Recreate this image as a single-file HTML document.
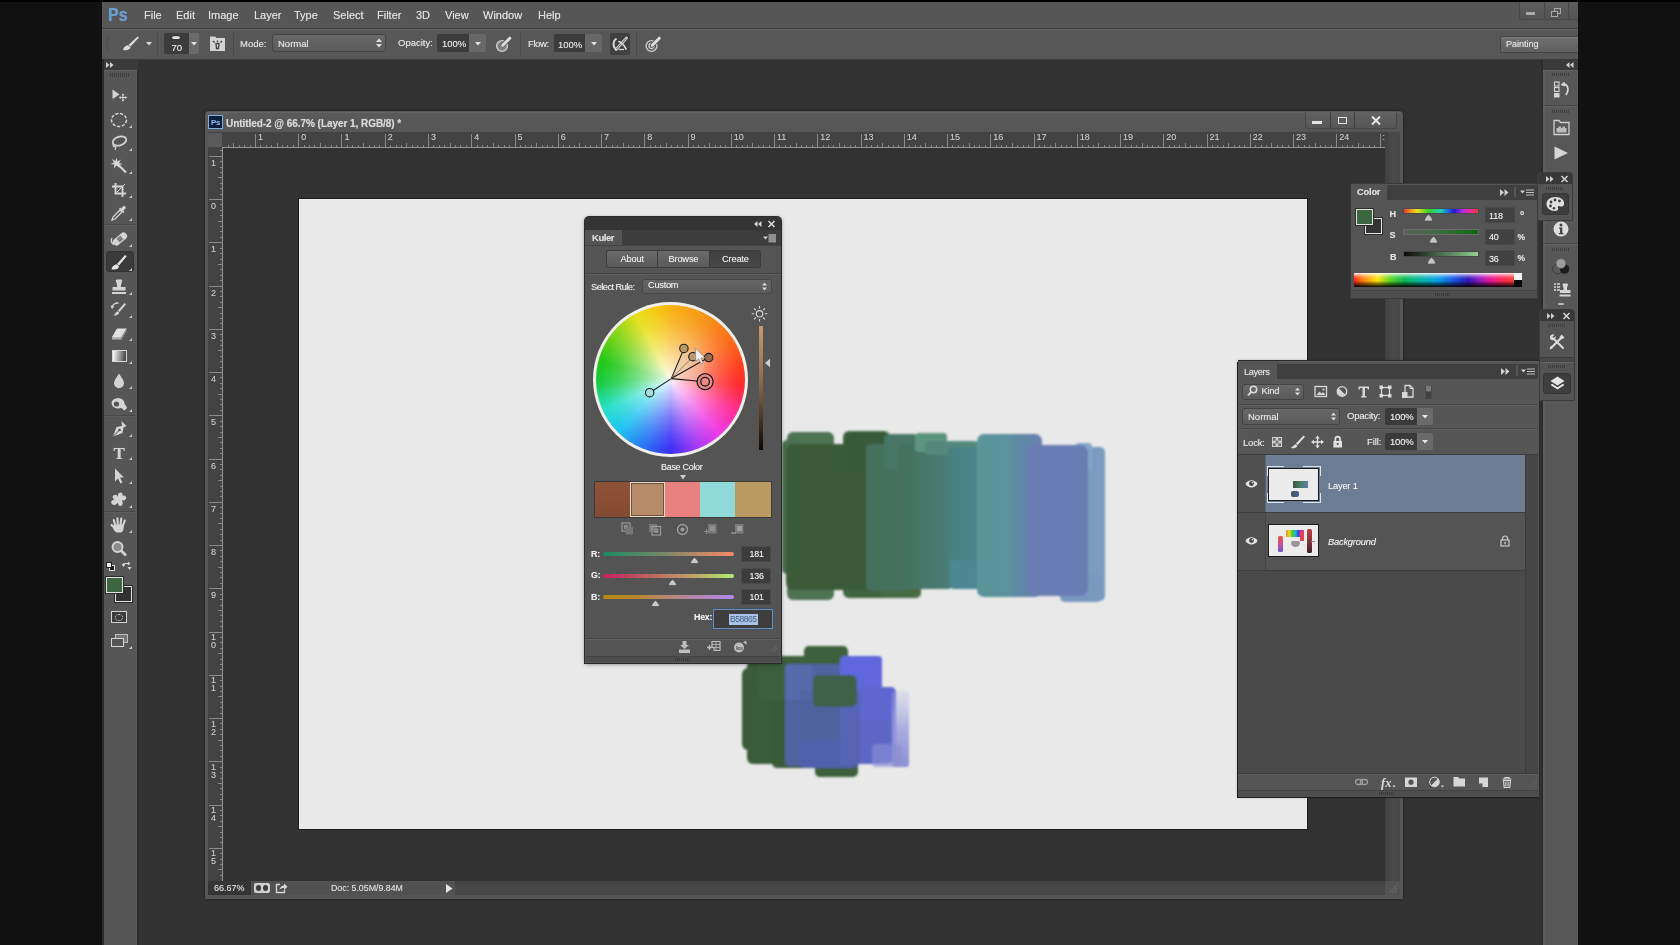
<!DOCTYPE html>
<html lang="en">
<head>
<meta charset="utf-8">
<title>Photoshop - Kuler</title>
<style>
*{box-sizing:border-box;margin:0;padding:0}
html,body{width:1680px;height:945px;overflow:hidden;background:#111}
body{position:relative;font-family:"Liberation Sans",sans-serif;font-size:9.5px;color:#e6e6e6;-webkit-font-smoothing:antialiased}
.abs{position:absolute}
#app{position:absolute;left:0;top:0;width:1680px;height:945px;overflow:hidden;will-change:transform}
#bg{position:absolute;left:0;top:0;width:1680px;height:945px;background:#323232}
.t{position:absolute;white-space:nowrap;line-height:1;color:#e4e4e4;text-shadow:0 0 .7px rgba(235,235,235,.55)}
svg{position:absolute;overflow:visible}
</style>
</head>
<body>
<div id="bg"></div>
<div id="app">
<!-- black side bars -->
<div class="abs" style="left:0;top:0;width:102px;height:945px;background:#111"></div>
<div class="abs" style="left:1578px;top:0;width:102px;height:945px;background:#111"></div>
<div class="abs" style="left:0;top:0;width:1680px;height:2px;background:#000"></div>
<!-- menu bar -->
<div class="abs" id="menubar" style="left:102px;top:2px;width:1476px;height:27px;background:#565657;border-bottom:1px solid #3e3e3e">
  <span class="t" style="left:6px;top:3px;font-size:19px;font-weight:bold;color:#6b9ccf;transform:scaleX(.84);transform-origin:0 0;text-shadow:0 0 .8px #6b9ccf">Ps</span>
  <span class="t mi" style="left:42px">File</span>
  <span class="t mi" style="left:74px">Edit</span>
  <span class="t mi" style="left:106px">Image</span>
  <span class="t mi" style="left:152px">Layer</span>
  <span class="t mi" style="left:192px">Type</span>
  <span class="t mi" style="left:231px">Select</span>
  <span class="t mi" style="left:275px">Filter</span>
  <span class="t mi" style="left:314px">3D</span>
  <span class="t mi" style="left:343px">View</span>
  <span class="t mi" style="left:381px">Window</span>
  <span class="t mi" style="left:436px">Help</span>
</div>
<style>
.mi{top:8px;font-size:11px;color:#e0e0e0}
.ob{position:absolute;border-radius:2px}
</style>
<!-- window buttons top-right -->
<div class="abs" style="left:1519px;top:2px;width:59px;height:17.500px;background:linear-gradient(#5d5d5d,#535353);border:1px solid #474747;border-top:none;border-right:none;border-radius:0 0 0 3px"></div><div class="abs" style="left:1568px;top:2px;width:1px;height:16px;background:#474747"></div>
<div class="abs" style="left:1526px;top:12px;width:9px;height:3px;background:#a8a8a8"></div>
<div class="abs" style="left:1554px;top:8px;width:7px;height:6px;border:1.5px solid #a8a8a8"></div>
<div class="abs" style="left:1551px;top:11px;width:7px;height:6px;border:1.5px solid #a8a8a8;background:#4c4c4c"></div>
<div class="abs" style="left:1543.500px;top:2px;width:1px;height:16px;background:#474747"></div>
<!-- options bar -->
<div class="abs" id="optbar" style="left:102px;top:29px;width:1476px;height:30.500px;background:#575757;border-top:1px solid #626262;border-bottom:1px solid #3a3a3a"></div>
<!-- grip -->
<div class="abs" style="left:106px;top:35px;width:3px;height:17px;background:repeating-linear-gradient(#4a4a4a 0 1px,transparent 1px 2px);opacity:.8"></div>
<!-- brush icon -->
<svg style="left:120px;top:33px" width="24" height="20" viewBox="0 0 24 20"><path d="M17.5 3.5 L19 4.5 L10.5 13.5 L8.5 12 Z" fill="#dcdcdc"/><path d="M8 12.300L10.500 14.300C10.500 16.600 7 17.800 3.200 16.900C2.800 15.200 5.500 12.600 8 12.300Z" fill="#dcdcdc"/></svg>
<svg style="left:146px;top:42px" width="6" height="4" viewBox="0 0 6 4"><path d="M0 0H6L3 3.5Z" fill="#d8d8d8"/></svg>
<div class="abs" style="left:157px;top:32px;width:1px;height:24px;background:#4a4a4a"></div>
<!-- size box -->
<div class="abs" style="left:164px;top:33px;width:25px;height:21px;background:#3c3c3c;border-radius:2px 0 0 2px"></div>
<div class="abs" style="left:189px;top:33px;width:10px;height:21px;background:#6a6a6a;border-radius:0 2px 2px 0"></div>
<div class="abs" style="left:172px;top:36px;width:8px;height:3px;background:#e0e0e0;border-radius:50%"></div>
<span class="t" style="left:171.5px;top:43px;font-size:9.5px">70</span>
<svg style="left:191px;top:42px" width="6" height="4" viewBox="0 0 6 4"><path d="M0 0H6L3 3.5Z" fill="#e0e0e0"/></svg>
<!-- brush panel toggle icon -->
<svg style="left:209px;top:35px" width="17" height="17" viewBox="0 0 17 17"><path d="M1 1.5H6L7.5 3H16V16H1Z" fill="#d2d2d2"/><path d="M4 6l1.5 1.5M8.5 5.5V7M13 6l-1.500 1.500M7 8.500c0 2 .5 3 .5 5h2c0-2 .5-3 .5-5Z" stroke="#444" stroke-width="1.300" fill="none"/></svg>
<div class="abs" style="left:233px;top:32px;width:1px;height:24px;background:#4a4a4a"></div>
<span class="t" style="left:240px;top:39px;font-size:9.5px">Mode:</span>
<div class="abs" style="left:272px;top:34px;width:114px;height:18px;border-radius:3px;background:linear-gradient(#686868,#5a5a5a);border:1px solid #444"></div>
<span class="t" style="left:278px;top:39px;font-size:9.5px">Normal</span>
<svg style="left:376px;top:38px" width="6" height="10" viewBox="0 0 6 10"><path d="M0 4L3 0.500L6 4ZM0 6H6L3 9.500Z" fill="#dcdcdc"/></svg>
<span class="t" style="left:398px;top:38px;font-size:9.5px">Opacity:</span>
<div class="abs" style="left:437px;top:34px;width:32px;height:18px;background:#3c3c3c;border-radius:2px 0 0 2px"></div>
<div class="abs" style="left:469px;top:34px;width:17px;height:18px;background:#686868;border-radius:0 2px 2px 0"></div>
<span class="t" style="left:442px;top:39px;font-size:9.5px">100%</span>
<svg style="left:475px;top:42px" width="6" height="4" viewBox="0 0 6 4"><path d="M0 0H6L3 3.500Z" fill="#e0e0e0"/></svg>
<!-- pressure opacity icon -->
<svg style="left:494px;top:34px" width="20" height="20" viewBox="0 0 20 20"><defs><pattern id="dots" width="2.400" height="2.400" patternUnits="userSpaceOnUse"><rect width="2.400" height="2.400" fill="#a4a4a4"/><rect width="1.200" height="1.200" fill="#5c5c5c"/><rect x="1.200" y="1.200" width="1.200" height="1.200" fill="#5c5c5c"/></pattern></defs><circle cx="8" cy="12" r="5.400" fill="url(#dots)" stroke="#cdcdcd" stroke-width="1.400"/><path d="M8.800 11.200L15.800 4.200" stroke="#575757" stroke-width="4.600" stroke-linecap="round"/><path d="M8.800 11.200L15.800 4.200" stroke="#dedede" stroke-width="3" stroke-linecap="round"/><path d="M7.300 12.700l1-2.300 1.300 1.300z" fill="#dedede"/></svg>
<div class="abs" style="left:520px;top:32px;width:1px;height:24px;background:#4a4a4a"></div>
<span class="t" style="left:528px;top:39px;font-size:9.500px;letter-spacing:-.4px">Flow:</span>
<div class="abs" style="left:554px;top:34px;width:31px;height:18px;background:#3c3c3c;border-radius:2px 0 0 2px"></div>
<div class="abs" style="left:585px;top:34px;width:17px;height:18px;background:#686868;border-radius:0 2px 2px 0"></div>
<span class="t" style="left:558px;top:39.500px;font-size:9.500px">100%</span>
<svg style="left:591px;top:42px" width="6" height="4" viewBox="0 0 6 4"><path d="M0 0H6L3 3.500Z" fill="#e0e0e0"/></svg>
<!-- airbrush icon -->
<div class="abs" style="left:610px;top:33px;width:20px;height:22px;background:#3f3f3f;border-radius:2px"></div>
<svg style="left:610px;top:34px" width="20" height="20" viewBox="0 0 20 20"><path d="M6.500 4.500C2.500 7 2.500 13 6.500 15.500" fill="none" stroke="#d4d4d4" stroke-width="2"/><path d="M6 15.500L16.500 4" stroke="#d8d8d8" stroke-width="2.600" stroke-linecap="round"/><path d="M6.500 15L16 4.500" stroke="#3f3f3f" stroke-width=".9"/><path d="M9 7.500C12 8.500 14 11 16 15" fill="none" stroke="#d4d4d4" stroke-width="1.700" stroke-linecap="round"/><path d="M8.500 15.500h5.500" stroke="#d4d4d4" stroke-width="1.300"/></svg>
<div class="abs" style="left:636px;top:32px;width:1px;height:24px;background:#4a4a4a"></div>
<svg style="left:643px;top:34px" width="20" height="20" viewBox="0 0 20 20"><circle cx="8.500" cy="12" r="5.400" fill="none" stroke="#cdcdcd" stroke-width="1.400"/><circle cx="8.500" cy="12" r="2.500" fill="none" stroke="#cdcdcd" stroke-width="1.300"/><path d="M9.300 11.200L16.300 4.200" stroke="#575757" stroke-width="4.600" stroke-linecap="round"/><path d="M9.300 11.200L16.300 4.200" stroke="#dedede" stroke-width="3" stroke-linecap="round"/><path d="M7.800 12.700l1-2.300 1.300 1.300z" fill="#dedede"/></svg>
<!-- workspace switcher -->
<div class="abs" style="left:1499.500px;top:35.500px;width:78.500px;height:17.500px;background:linear-gradient(#6f6f6f,#5f5f5f);border:1px solid #454545;border-right:none;border-radius:2px 0 0 2px;box-shadow:inset 0 1px 0 #7c7c7c"></div>
<span class="t" style="left:1506px;top:39.500px;font-size:9px">Painting</span>
<!-- left toolbar -->
<div class="abs" style="left:102px;top:59px;width:2px;height:886px;background:#2b2b2b"></div>
<div class="abs" style="left:104px;top:60px;width:34px;height:10px;background:#3a3a3a"></div>
<div class="abs" style="left:104px;top:70px;width:33px;height:875px;background:#565656;border-top:1px solid #626262"></div>
<div class="abs" style="left:137px;top:70px;width:3px;height:875px;background:linear-gradient(90deg,#2a2a2a,#323232)"></div>
<svg style="left:106px;top:62px" width="8" height="6" viewBox="0 0 8 6"><path d="M0 0L3.500 3L0 6ZM4 0L7.500 3L4 6Z" fill="#d0d0d0"/></svg>
<div class="abs" style="left:110px;top:73px;width:20px;height:4px;background:repeating-linear-gradient(90deg,#3e3e3e 0 1px,transparent 1px 2px)"></div>
<div class="abs" style="left:105px;top:224px;width:30px;height:1px;background:#474747"></div><div class="abs" style="left:105px;top:225px;width:30px;height:1px;background:#5e5e5e"></div>
<div class="abs" style="left:105px;top:415px;width:30px;height:1px;background:#474747"></div><div class="abs" style="left:105px;top:416px;width:30px;height:1px;background:#5e5e5e"></div>
<div class="abs" style="left:105px;top:511px;width:30px;height:1px;background:#474747"></div><div class="abs" style="left:105px;top:512px;width:30px;height:1px;background:#5e5e5e"></div>
<div class="abs" style="left:106px;top:251px;width:28px;height:21px;background:#3a3a3a;border-radius:3px;border:1px solid #333"></div>
<svg style="left:109px;top:85px" width="20" height="20" viewBox="0 0 20 20"><path d="M3.500 4.500L10.500 9.500L3.500 14Z" fill="#d4d4d4"/><path d="M14 9.500v6M11 12.500h6" stroke="#d4d4d4" stroke-width="1.100"/><path d="M14 8.300l1.400 1.900h-2.800zM14 16.700l1.400-1.900h-2.800zM9.800 12.500l1.900-1.400v2.800zM18.200 12.500l-1.900-1.400v2.800z" fill="#d4d4d4"/></svg>
<svg style="left:109px;top:110px" width="20" height="20" viewBox="0 0 20 20"><ellipse cx="10" cy="10" rx="7.500" ry="6.500" fill="none" stroke="#d4d4d4" stroke-width="1.500" stroke-dasharray="3.200 1.600"/></svg>
<svg style="left:129px;top:125px" width="3" height="3" viewBox="0 0 3 3"><path d="M3 0V3H0Z" fill="#c8c8c8"/></svg>
<svg style="left:109px;top:133px" width="20" height="20" viewBox="0 0 20 20"><ellipse cx="10.500" cy="8" rx="7" ry="4.300" fill="none" stroke="#d4d4d4" stroke-width="1.700" transform="rotate(-18 10.500 8)"/><path d="M5 10.500c-1.500 1.500-1 3.500.8 3.200c1.200-.2 1.200 1.600.2 3.300" fill="none" stroke="#d4d4d4" stroke-width="1.300"/></svg>
<svg style="left:129px;top:148px" width="3" height="3" viewBox="0 0 3 3"><path d="M3 0V3H0Z" fill="#c8c8c8"/></svg>
<svg style="left:109px;top:156px" width="20" height="20" viewBox="0 0 20 20"><path d="M9 8.500L17 16.500" stroke="#d4d4d4" stroke-width="2.200"/><path d="M7.500 1.500l1 4 3.500-2-2 3.500 4 1-4 1 .5 3-3-2.500-2.500 3 .3-4-3.800-.5 3.500-1.500-2-3.500 3.500 2z" fill="#d4d4d4"/></svg>
<svg style="left:129px;top:171px" width="3" height="3" viewBox="0 0 3 3"><path d="M3 0V3H0Z" fill="#c8c8c8"/></svg>
<svg style="left:109px;top:180px" width="20" height="20" viewBox="0 0 20 20"><path d="M6.500 3V13.500H17M3 6.500H13.500V17" fill="none" stroke="#d4d4d4" stroke-width="1.900"/><path d="M16 4L7.500 12.500" stroke="#d4d4d4" stroke-width="1"/></svg>
<svg style="left:129px;top:195px" width="3" height="3" viewBox="0 0 3 3"><path d="M3 0V3H0Z" fill="#c8c8c8"/></svg>
<svg style="left:109px;top:203px" width="20" height="20" viewBox="0 0 20 20"><path d="M3 17l1-3 7-7 2 2-7 7z" fill="none" stroke="#d4d4d4" stroke-width="1.300"/><path d="M10 5.500l4.500 4.500 1-1-1.200-1.200 2.200-2.200c1.300-1.300-1-3.600-2.300-2.300l-2.200 2.200-1-1z" fill="#d4d4d4"/></svg>
<svg style="left:129px;top:218px" width="3" height="3" viewBox="0 0 3 3"><path d="M3 0V3H0Z" fill="#c8c8c8"/></svg>
<svg style="left:109px;top:229px" width="20" height="20" viewBox="0 0 20 20"><path d="M3 9c-1.500 2.500-.5 5.500 2 6.500" fill="none" stroke="#d4d4d4" stroke-width="1.400"/><g transform="rotate(-40 11 10)"><rect x="3" y="6.500" width="16" height="7" rx="3.300" fill="#d4d4d4"/><rect x="8.500" y="7.500" width="5" height="5" fill="#888"/><path d="M9.500 9h1M11.500 9h1M9.500 11h1M11.500 11h1" stroke="#555" stroke-width=".8"/></g></svg>
<svg style="left:129px;top:244px" width="3" height="3" viewBox="0 0 3 3"><path d="M3 0V3H0Z" fill="#c8c8c8"/></svg>
<svg style="left:109px;top:253px" width="20" height="20" viewBox="0 0 20 20"><path d="M16 2L17.700 3.300L10 12.500L8 11Z" fill="#e4e4e4"/><path d="M7.500 11.300L10 13.300C10 15.800 6.500 17.200 2.700 16.300C2.300 14.500 5 11.600 7.500 11.300Z" fill="#e4e4e4"/></svg>
<svg style="left:129px;top:268px" width="3" height="3" viewBox="0 0 3 3"><path d="M3 0V3H0Z" fill="#c8c8c8"/></svg>
<svg style="left:109px;top:277px" width="20" height="20" viewBox="0 0 20 20"><path d="M8 2.500h4c1.200 0 1.500 1 1 2l-1 3.500v2h4.500v3.500h-13v-3.500h4.500v-2l-1-3.500c-.5-1-.2-2 1-2z" fill="#d4d4d4"/><rect x="3" y="15" width="14" height="2" fill="#d4d4d4"/></svg>
<svg style="left:129px;top:292px" width="3" height="3" viewBox="0 0 3 3"><path d="M3 0V3H0Z" fill="#c8c8c8"/></svg>
<svg style="left:109px;top:300px" width="20" height="20" viewBox="0 0 20 20"><path d="M15.500 3L17 4.200L10.500 12L8.800 10.700Z" fill="#d4d4d4"/><path d="M8.300 11.200l2 1.600c-.7 2.300-3.500 3.200-6 2.600 1.700-.8 2-3.300 4-4.200z" fill="#d4d4d4"/><path d="M3 7.500c.5-3 3.500-5 6.500-4.300" fill="none" stroke="#d4d4d4" stroke-width="1.400"/><path d="M1.500 5.500l1.500 3.500 2.500-2.500z" fill="#d4d4d4"/></svg>
<svg style="left:129px;top:315px" width="3" height="3" viewBox="0 0 3 3"><path d="M3 0V3H0Z" fill="#c8c8c8"/></svg>
<svg style="left:109px;top:323px" width="20" height="20" viewBox="0 0 20 20"><path d="M8 5.500h9.500l-5 8.500H3z" fill="#e0e0e0"/><path d="M3 14h9.500v2.500H3z" fill="#b0b0b0"/><path d="M12.500 14l5-8.500v2.500l-5 8.500z" fill="#9a9a9a"/></svg>
<svg style="left:129px;top:338px" width="3" height="3" viewBox="0 0 3 3"><path d="M3 0V3H0Z" fill="#c8c8c8"/></svg>
<div class="abs" style="left:112px;top:350px;width:15px;height:12px;border:1.500px solid #d8d8d8;background:linear-gradient(95deg,#f4f4f4 5%,#444 95%)"></div>
<svg style="left:129px;top:361px" width="3" height="3" viewBox="0 0 3 3"><path d="M3 0V3H0Z" fill="#c8c8c8"/></svg>
<svg style="left:109px;top:371px" width="20" height="20" viewBox="0 0 20 20"><path d="M10 2.500c2 3.500 5 6.500 5 9.700a5 5 0 0 1-10 0c0-3.200 3-6.200 5-9.700z" fill="#d4d4d4"/></svg>
<svg style="left:129px;top:386px" width="3" height="3" viewBox="0 0 3 3"><path d="M3 0V3H0Z" fill="#c8c8c8"/></svg>
<svg style="left:109px;top:394px" width="20" height="20" viewBox="0 0 20 20"><path d="M2.500 9.500a6.500 5.500 0 0 1 13 0c0 1 2 2 2.500 4.500l-2.500 2.500c-2-1.500-3-3-4-2.500a6.500 5.500 0 0 1-9-4.500z" fill="#d4d4d4"/><circle cx="7.500" cy="10" r="2.600" fill="#545454"/></svg>
<svg style="left:129px;top:409px" width="3" height="3" viewBox="0 0 3 3"><path d="M3 0V3H0Z" fill="#c8c8c8"/></svg>
<svg style="left:109px;top:419px" width="20" height="20" viewBox="0 0 20 20"><path d="M12.500 2l5 5-3 1.500-1 5.500-9.500 3.500 3.500-9.500 5.500-1z" fill="#d4d4d4"/><path d="M4.500 17l5.500-5.500" stroke="#545454" stroke-width="1"/><circle cx="10.500" cy="11" r="1.300" fill="#545454"/></svg>
<svg style="left:129px;top:434px" width="3" height="3" viewBox="0 0 3 3"><path d="M3 0V3H0Z" fill="#c8c8c8"/></svg>
<span class="t" style="left:113.500px;top:445px;font-family:'Liberation Serif',serif;font-size:17px;font-weight:bold;color:#d4d4d4">T</span>
<svg style="left:129px;top:457px" width="3" height="3" viewBox="0 0 3 3"><path d="M3 0V3H0Z" fill="#c8c8c8"/></svg>
<svg style="left:109px;top:466px" width="20" height="20" viewBox="0 0 20 20"><path d="M6 2.500V15.500L9 12.500L11.500 17.500L13.500 16.500L11 11.500H15Z" fill="#d4d4d4"/></svg>
<svg style="left:129px;top:481px" width="3" height="3" viewBox="0 0 3 3"><path d="M3 0V3H0Z" fill="#c8c8c8"/></svg>
<svg style="left:109px;top:490px" width="20" height="20" viewBox="0 0 20 20"><path d="M10 3c2-1.500 4 0 3.500 2.500 2.500-.5 5 1.500 3 4-1 1.200-2.500 1-3.500.5.500 2 1.500 4-.5 5.500s-3.500-.5-3.500-3c-1.500 2-4 3.500-6 1.500s0-4 2.500-4.500c-2-1-2.500-3.500-.5-4.500s3.500.5 4 2c-.5-2 .2-3.300 1-4z" fill="#d4d4d4"/></svg>
<svg style="left:129px;top:505px" width="3" height="3" viewBox="0 0 3 3"><path d="M3 0V3H0Z" fill="#c8c8c8"/></svg>
<svg style="left:109px;top:515px" width="20" height="20" viewBox="0 0 20 20"><g fill="none" stroke="#d4d4d4" stroke-width="2.100" stroke-linecap="round"><path d="M6.200 10.500L4.800 5"/><path d="M8.800 9.500L8.500 3.200"/><path d="M11.500 9.500L12.300 3.500"/><path d="M14 10.500L15.800 5.500"/><path d="M5.500 13L2.500 10"/></g><path d="M5 9.500h10l-.5 4.500c-.3 2-1.500 3.500-3 3.500h-3.500c-1.500 0-3-2-4-4.500z" fill="#d4d4d4"/></svg>
<svg style="left:129px;top:530px" width="3" height="3" viewBox="0 0 3 3"><path d="M3 0V3H0Z" fill="#c8c8c8"/></svg>
<svg style="left:109px;top:539px" width="20" height="20" viewBox="0 0 20 20"><circle cx="8.500" cy="8" r="5" fill="#8c8c8c" stroke="#d4d4d4" stroke-width="1.900"/><path d="M12 11.500L17 16.500" stroke="#d4d4d4" stroke-width="2.600"/></svg>
<div class="abs" style="left:109px;top:565px;width:6px;height:6px;background:#222;border:1px solid #ddd"></div>
<div class="abs" style="left:106px;top:562px;width:6px;height:6px;background:#eee;border:1px solid #222"></div>
<svg style="left:121px;top:561px" width="11" height="11" viewBox="0 0 11 11"><path d="M2.500 5V3.500a1 1 0 0 1 1-1H7.500M8.500 6v1.500" fill="none" stroke="#d4d4d4" stroke-width="1.200"/><path d="M2.500 7.500L.5 4.500h4zM8.500 10.500L6.500 7.500h4z" fill="#d4d4d4" transform="translate(0,-1.500)"/><path d="M9.500 2.500L6.800 .5v4z" fill="#d4d4d4"/></svg>
<div class="abs" style="left:115px;top:586px;width:17px;height:16px;background:#323232;border:1px solid #e2e2e2;box-shadow:0 0 0 1px #2a2a2a"></div>
<div class="abs" style="left:106px;top:577px;width:17px;height:16px;background:#3c6640;border:1px solid #e2e2e2;box-shadow:0 0 0 1px #2a2a2a"></div>
<div class="abs" style="left:111px;top:611px;width:16px;height:12px;border:1.500px solid #d4d4d4;background:#3c3c3c"></div>
<div class="abs" style="left:115px;top:613.500px;width:8px;height:7px;border:1.500px dotted #d4d4d4;border-radius:50%"></div>
<div class="abs" style="left:115px;top:634px;width:13px;height:9px;border:1.500px solid #bdbdbd;background:#777"></div>
<div class="abs" style="left:111px;top:638px;width:13px;height:9px;border:1.500px solid #d4d4d4;background:#545454"></div>
<svg style="left:129px;top:646px" width="3" height="3" viewBox="0 0 3 3"><path d="M3 0V3H0Z" fill="#c8c8c8"/></svg>
<!-- document window -->
<div class="abs" style="left:205px;top:111px;width:1198px;height:788px;background:#555;border-radius:4px 4px 0 0;box-shadow:0 0 3px rgba(0,0,0,.45)"></div>
<div class="abs" style="left:206px;top:112px;width:1196px;height:20px;background:linear-gradient(#5a5a5a,#565656);border-radius:3px 3px 0 0;border-top:1px solid #646464"></div>
<div class="abs" style="left:208px;top:115px;width:15px;height:14px;background:#0d1b3c;border:1px solid #7fb0e0"></div>
<span class="t" style="left:211px;top:118.500px;font-size:8px;font-weight:bold;color:#8fc0f0;letter-spacing:-.3px;text-shadow:none">Ps</span>
<span class="t" style="left:226px;top:118.500px;font-size:10px;font-weight:bold;color:#d8d8d8;letter-spacing:-.05px">Untitled-2 @ 66.7% (Layer 1, RGB/8) *</span>
<div class="abs" style="left:1305px;top:112px;width:92px;height:17px;background:linear-gradient(#626262,#565656);border:1px solid #464646;border-top:none;border-radius:0 0 4px 4px"></div>
<div class="abs" style="left:1330px;top:112px;width:1px;height:16px;background:#424242"></div><div class="abs" style="left:1354px;top:112px;width:1px;height:16px;background:#424242"></div>
<div class="abs" style="left:1312px;top:121px;width:10px;height:3px;background:#e2e2e2"></div>
<div class="abs" style="left:1338px;top:117px;width:9px;height:7px;border:1.500px solid #e2e2e2"></div>
<svg style="left:1371px;top:116px" width="10" height="9" viewBox="0 0 10 9"><path d="M1 .5L9 8.500M9 .5L1 8.500" stroke="#e6e6e6" stroke-width="1.900"/></svg>
<div class="abs" style="left:223px;top:148px;width:1162px;height:733px;background:#323232"></div>
<div class="abs" style="left:208px;top:132px;width:1177px;height:16px;background:#434343"></div>
<div class="abs" style="left:208px;top:148px;width:15px;height:733px;background:#434343"></div>
<div class="abs" style="left:208px;top:133px;width:14px;height:14px;background:#5a5a5a"></div>
<svg style="left:0;top:0" width="1680" height="945" viewBox="0 0 1680 945" shape-rendering="crispEdges"><rect x="227.9" y="145" width="1" height="3" fill="#868686"/><rect x="233.3" y="143" width="1" height="5" fill="#868686"/><rect x="238.7" y="145" width="1" height="3" fill="#868686"/><rect x="244.1" y="145" width="1" height="3" fill="#868686"/><rect x="249.5" y="145" width="1" height="3" fill="#868686"/><rect x="254.9" y="134" width="1" height="14" fill="#8a8a8a"/><rect x="260.4" y="145" width="1" height="3" fill="#868686"/><rect x="265.8" y="145" width="1" height="3" fill="#868686"/><rect x="271.2" y="145" width="1" height="3" fill="#868686"/><rect x="276.6" y="143" width="1" height="5" fill="#868686"/><rect x="282.0" y="145" width="1" height="3" fill="#868686"/><rect x="287.4" y="145" width="1" height="3" fill="#868686"/><rect x="292.8" y="145" width="1" height="3" fill="#868686"/><rect x="298.2" y="134" width="1" height="14" fill="#8a8a8a"/><rect x="303.6" y="145" width="1" height="3" fill="#868686"/><rect x="309.0" y="145" width="1" height="3" fill="#868686"/><rect x="314.4" y="145" width="1" height="3" fill="#868686"/><rect x="319.8" y="143" width="1" height="5" fill="#868686"/><rect x="325.2" y="145" width="1" height="3" fill="#868686"/><rect x="330.6" y="145" width="1" height="3" fill="#868686"/><rect x="336.0" y="145" width="1" height="3" fill="#868686"/><rect x="341.4" y="134" width="1" height="14" fill="#8a8a8a"/><rect x="346.9" y="145" width="1" height="3" fill="#868686"/><rect x="352.3" y="145" width="1" height="3" fill="#868686"/><rect x="357.7" y="145" width="1" height="3" fill="#868686"/><rect x="363.1" y="143" width="1" height="5" fill="#868686"/><rect x="368.5" y="145" width="1" height="3" fill="#868686"/><rect x="373.9" y="145" width="1" height="3" fill="#868686"/><rect x="379.3" y="145" width="1" height="3" fill="#868686"/><rect x="384.7" y="134" width="1" height="14" fill="#8a8a8a"/><rect x="390.1" y="145" width="1" height="3" fill="#868686"/><rect x="395.5" y="145" width="1" height="3" fill="#868686"/><rect x="400.9" y="145" width="1" height="3" fill="#868686"/><rect x="406.3" y="143" width="1" height="5" fill="#868686"/><rect x="411.7" y="145" width="1" height="3" fill="#868686"/><rect x="417.1" y="145" width="1" height="3" fill="#868686"/><rect x="422.5" y="145" width="1" height="3" fill="#868686"/><rect x="427.9" y="134" width="1" height="14" fill="#8a8a8a"/><rect x="433.4" y="145" width="1" height="3" fill="#868686"/><rect x="438.8" y="145" width="1" height="3" fill="#868686"/><rect x="444.2" y="145" width="1" height="3" fill="#868686"/><rect x="449.6" y="143" width="1" height="5" fill="#868686"/><rect x="455.0" y="145" width="1" height="3" fill="#868686"/><rect x="460.4" y="145" width="1" height="3" fill="#868686"/><rect x="465.8" y="145" width="1" height="3" fill="#868686"/><rect x="471.2" y="134" width="1" height="14" fill="#8a8a8a"/><rect x="476.6" y="145" width="1" height="3" fill="#868686"/><rect x="482.0" y="145" width="1" height="3" fill="#868686"/><rect x="487.4" y="145" width="1" height="3" fill="#868686"/><rect x="492.8" y="143" width="1" height="5" fill="#868686"/><rect x="498.2" y="145" width="1" height="3" fill="#868686"/><rect x="503.6" y="145" width="1" height="3" fill="#868686"/><rect x="509.0" y="145" width="1" height="3" fill="#868686"/><rect x="514.5" y="134" width="1" height="14" fill="#8a8a8a"/><rect x="519.9" y="145" width="1" height="3" fill="#868686"/><rect x="525.3" y="145" width="1" height="3" fill="#868686"/><rect x="530.7" y="145" width="1" height="3" fill="#868686"/><rect x="536.1" y="143" width="1" height="5" fill="#868686"/><rect x="541.5" y="145" width="1" height="3" fill="#868686"/><rect x="546.9" y="145" width="1" height="3" fill="#868686"/><rect x="552.3" y="145" width="1" height="3" fill="#868686"/><rect x="557.7" y="134" width="1" height="14" fill="#8a8a8a"/><rect x="563.1" y="145" width="1" height="3" fill="#868686"/><rect x="568.5" y="145" width="1" height="3" fill="#868686"/><rect x="573.9" y="145" width="1" height="3" fill="#868686"/><rect x="579.3" y="143" width="1" height="5" fill="#868686"/><rect x="584.7" y="145" width="1" height="3" fill="#868686"/><rect x="590.1" y="145" width="1" height="3" fill="#868686"/><rect x="595.5" y="145" width="1" height="3" fill="#868686"/><rect x="601.0" y="134" width="1" height="14" fill="#8a8a8a"/><rect x="606.4" y="145" width="1" height="3" fill="#868686"/><rect x="611.8" y="145" width="1" height="3" fill="#868686"/><rect x="617.2" y="145" width="1" height="3" fill="#868686"/><rect x="622.6" y="143" width="1" height="5" fill="#868686"/><rect x="628.0" y="145" width="1" height="3" fill="#868686"/><rect x="633.4" y="145" width="1" height="3" fill="#868686"/><rect x="638.8" y="145" width="1" height="3" fill="#868686"/><rect x="644.2" y="134" width="1" height="14" fill="#8a8a8a"/><rect x="649.6" y="145" width="1" height="3" fill="#868686"/><rect x="655.0" y="145" width="1" height="3" fill="#868686"/><rect x="660.4" y="145" width="1" height="3" fill="#868686"/><rect x="665.8" y="143" width="1" height="5" fill="#868686"/><rect x="671.2" y="145" width="1" height="3" fill="#868686"/><rect x="676.6" y="145" width="1" height="3" fill="#868686"/><rect x="682.0" y="145" width="1" height="3" fill="#868686"/><rect x="687.5" y="134" width="1" height="14" fill="#8a8a8a"/><rect x="692.9" y="145" width="1" height="3" fill="#868686"/><rect x="698.3" y="145" width="1" height="3" fill="#868686"/><rect x="703.7" y="145" width="1" height="3" fill="#868686"/><rect x="709.1" y="143" width="1" height="5" fill="#868686"/><rect x="714.5" y="145" width="1" height="3" fill="#868686"/><rect x="719.9" y="145" width="1" height="3" fill="#868686"/><rect x="725.3" y="145" width="1" height="3" fill="#868686"/><rect x="730.7" y="134" width="1" height="14" fill="#8a8a8a"/><rect x="736.1" y="145" width="1" height="3" fill="#868686"/><rect x="741.5" y="145" width="1" height="3" fill="#868686"/><rect x="746.9" y="145" width="1" height="3" fill="#868686"/><rect x="752.3" y="143" width="1" height="5" fill="#868686"/><rect x="757.7" y="145" width="1" height="3" fill="#868686"/><rect x="763.1" y="145" width="1" height="3" fill="#868686"/><rect x="768.5" y="145" width="1" height="3" fill="#868686"/><rect x="774.0" y="134" width="1" height="14" fill="#8a8a8a"/><rect x="779.4" y="145" width="1" height="3" fill="#868686"/><rect x="784.8" y="145" width="1" height="3" fill="#868686"/><rect x="790.2" y="145" width="1" height="3" fill="#868686"/><rect x="795.6" y="143" width="1" height="5" fill="#868686"/><rect x="801.0" y="145" width="1" height="3" fill="#868686"/><rect x="806.4" y="145" width="1" height="3" fill="#868686"/><rect x="811.8" y="145" width="1" height="3" fill="#868686"/><rect x="817.2" y="134" width="1" height="14" fill="#8a8a8a"/><rect x="822.6" y="145" width="1" height="3" fill="#868686"/><rect x="828.0" y="145" width="1" height="3" fill="#868686"/><rect x="833.4" y="145" width="1" height="3" fill="#868686"/><rect x="838.8" y="143" width="1" height="5" fill="#868686"/><rect x="844.2" y="145" width="1" height="3" fill="#868686"/><rect x="849.6" y="145" width="1" height="3" fill="#868686"/><rect x="855.0" y="145" width="1" height="3" fill="#868686"/><rect x="860.5" y="134" width="1" height="14" fill="#8a8a8a"/><rect x="865.9" y="145" width="1" height="3" fill="#868686"/><rect x="871.3" y="145" width="1" height="3" fill="#868686"/><rect x="876.7" y="145" width="1" height="3" fill="#868686"/><rect x="882.1" y="143" width="1" height="5" fill="#868686"/><rect x="887.5" y="145" width="1" height="3" fill="#868686"/><rect x="892.9" y="145" width="1" height="3" fill="#868686"/><rect x="898.3" y="145" width="1" height="3" fill="#868686"/><rect x="903.7" y="134" width="1" height="14" fill="#8a8a8a"/><rect x="909.1" y="145" width="1" height="3" fill="#868686"/><rect x="914.5" y="145" width="1" height="3" fill="#868686"/><rect x="919.9" y="145" width="1" height="3" fill="#868686"/><rect x="925.3" y="143" width="1" height="5" fill="#868686"/><rect x="930.7" y="145" width="1" height="3" fill="#868686"/><rect x="936.1" y="145" width="1" height="3" fill="#868686"/><rect x="941.5" y="145" width="1" height="3" fill="#868686"/><rect x="947.0" y="134" width="1" height="14" fill="#8a8a8a"/><rect x="952.4" y="145" width="1" height="3" fill="#868686"/><rect x="957.8" y="145" width="1" height="3" fill="#868686"/><rect x="963.2" y="145" width="1" height="3" fill="#868686"/><rect x="968.6" y="143" width="1" height="5" fill="#868686"/><rect x="974.0" y="145" width="1" height="3" fill="#868686"/><rect x="979.4" y="145" width="1" height="3" fill="#868686"/><rect x="984.8" y="145" width="1" height="3" fill="#868686"/><rect x="990.2" y="134" width="1" height="14" fill="#8a8a8a"/><rect x="995.6" y="145" width="1" height="3" fill="#868686"/><rect x="1001.0" y="145" width="1" height="3" fill="#868686"/><rect x="1006.4" y="145" width="1" height="3" fill="#868686"/><rect x="1011.8" y="143" width="1" height="5" fill="#868686"/><rect x="1017.2" y="145" width="1" height="3" fill="#868686"/><rect x="1022.6" y="145" width="1" height="3" fill="#868686"/><rect x="1028.0" y="145" width="1" height="3" fill="#868686"/><rect x="1033.5" y="134" width="1" height="14" fill="#8a8a8a"/><rect x="1038.9" y="145" width="1" height="3" fill="#868686"/><rect x="1044.3" y="145" width="1" height="3" fill="#868686"/><rect x="1049.7" y="145" width="1" height="3" fill="#868686"/><rect x="1055.1" y="143" width="1" height="5" fill="#868686"/><rect x="1060.5" y="145" width="1" height="3" fill="#868686"/><rect x="1065.9" y="145" width="1" height="3" fill="#868686"/><rect x="1071.3" y="145" width="1" height="3" fill="#868686"/><rect x="1076.7" y="134" width="1" height="14" fill="#8a8a8a"/><rect x="1082.1" y="145" width="1" height="3" fill="#868686"/><rect x="1087.5" y="145" width="1" height="3" fill="#868686"/><rect x="1092.9" y="145" width="1" height="3" fill="#868686"/><rect x="1098.3" y="143" width="1" height="5" fill="#868686"/><rect x="1103.7" y="145" width="1" height="3" fill="#868686"/><rect x="1109.1" y="145" width="1" height="3" fill="#868686"/><rect x="1114.5" y="145" width="1" height="3" fill="#868686"/><rect x="1120.0" y="134" width="1" height="14" fill="#8a8a8a"/><rect x="1125.4" y="145" width="1" height="3" fill="#868686"/><rect x="1130.8" y="145" width="1" height="3" fill="#868686"/><rect x="1136.2" y="145" width="1" height="3" fill="#868686"/><rect x="1141.6" y="143" width="1" height="5" fill="#868686"/><rect x="1147.0" y="145" width="1" height="3" fill="#868686"/><rect x="1152.4" y="145" width="1" height="3" fill="#868686"/><rect x="1157.8" y="145" width="1" height="3" fill="#868686"/><rect x="1163.2" y="134" width="1" height="14" fill="#8a8a8a"/><rect x="1168.6" y="145" width="1" height="3" fill="#868686"/><rect x="1174.0" y="145" width="1" height="3" fill="#868686"/><rect x="1179.4" y="145" width="1" height="3" fill="#868686"/><rect x="1184.8" y="143" width="1" height="5" fill="#868686"/><rect x="1190.2" y="145" width="1" height="3" fill="#868686"/><rect x="1195.6" y="145" width="1" height="3" fill="#868686"/><rect x="1201.0" y="145" width="1" height="3" fill="#868686"/><rect x="1206.5" y="134" width="1" height="14" fill="#8a8a8a"/><rect x="1211.9" y="145" width="1" height="3" fill="#868686"/><rect x="1217.3" y="145" width="1" height="3" fill="#868686"/><rect x="1222.7" y="145" width="1" height="3" fill="#868686"/><rect x="1228.1" y="143" width="1" height="5" fill="#868686"/><rect x="1233.5" y="145" width="1" height="3" fill="#868686"/><rect x="1238.9" y="145" width="1" height="3" fill="#868686"/><rect x="1244.3" y="145" width="1" height="3" fill="#868686"/><rect x="1249.7" y="134" width="1" height="14" fill="#8a8a8a"/><rect x="1255.1" y="145" width="1" height="3" fill="#868686"/><rect x="1260.5" y="145" width="1" height="3" fill="#868686"/><rect x="1265.9" y="145" width="1" height="3" fill="#868686"/><rect x="1271.3" y="143" width="1" height="5" fill="#868686"/><rect x="1276.7" y="145" width="1" height="3" fill="#868686"/><rect x="1282.1" y="145" width="1" height="3" fill="#868686"/><rect x="1287.5" y="145" width="1" height="3" fill="#868686"/><rect x="1293.0" y="134" width="1" height="14" fill="#8a8a8a"/><rect x="1298.4" y="145" width="1" height="3" fill="#868686"/><rect x="1303.8" y="145" width="1" height="3" fill="#868686"/><rect x="1309.2" y="145" width="1" height="3" fill="#868686"/><rect x="1314.6" y="143" width="1" height="5" fill="#868686"/><rect x="1320.0" y="145" width="1" height="3" fill="#868686"/><rect x="1325.4" y="145" width="1" height="3" fill="#868686"/><rect x="1330.8" y="145" width="1" height="3" fill="#868686"/><rect x="1336.2" y="134" width="1" height="14" fill="#8a8a8a"/><rect x="1341.6" y="145" width="1" height="3" fill="#868686"/><rect x="1347.0" y="145" width="1" height="3" fill="#868686"/><rect x="1352.4" y="145" width="1" height="3" fill="#868686"/><rect x="1357.8" y="143" width="1" height="5" fill="#868686"/><rect x="1363.2" y="145" width="1" height="3" fill="#868686"/><rect x="1368.6" y="145" width="1" height="3" fill="#868686"/><rect x="1374.0" y="145" width="1" height="3" fill="#868686"/><rect x="1379.5" y="134" width="1" height="14" fill="#8a8a8a"/><rect x="220" y="150.3" width="3" height="1" fill="#868686"/><rect x="209" y="155.8" width="14" height="1" fill="#8a8a8a"/><rect x="220" y="161.2" width="3" height="1" fill="#868686"/><rect x="220" y="166.6" width="3" height="1" fill="#868686"/><rect x="220" y="172.0" width="3" height="1" fill="#868686"/><rect x="218" y="177.4" width="5" height="1" fill="#868686"/><rect x="220" y="182.8" width="3" height="1" fill="#868686"/><rect x="220" y="188.2" width="3" height="1" fill="#868686"/><rect x="220" y="193.6" width="3" height="1" fill="#868686"/><rect x="209" y="199.0" width="14" height="1" fill="#8a8a8a"/><rect x="220" y="204.4" width="3" height="1" fill="#868686"/><rect x="220" y="209.8" width="3" height="1" fill="#868686"/><rect x="220" y="215.2" width="3" height="1" fill="#868686"/><rect x="218" y="220.6" width="5" height="1" fill="#868686"/><rect x="220" y="226.0" width="3" height="1" fill="#868686"/><rect x="220" y="231.4" width="3" height="1" fill="#868686"/><rect x="220" y="236.8" width="3" height="1" fill="#868686"/><rect x="209" y="242.2" width="14" height="1" fill="#8a8a8a"/><rect x="220" y="247.7" width="3" height="1" fill="#868686"/><rect x="220" y="253.1" width="3" height="1" fill="#868686"/><rect x="220" y="258.5" width="3" height="1" fill="#868686"/><rect x="218" y="263.9" width="5" height="1" fill="#868686"/><rect x="220" y="269.3" width="3" height="1" fill="#868686"/><rect x="220" y="274.7" width="3" height="1" fill="#868686"/><rect x="220" y="280.1" width="3" height="1" fill="#868686"/><rect x="209" y="285.5" width="14" height="1" fill="#8a8a8a"/><rect x="220" y="290.9" width="3" height="1" fill="#868686"/><rect x="220" y="296.3" width="3" height="1" fill="#868686"/><rect x="220" y="301.7" width="3" height="1" fill="#868686"/><rect x="218" y="307.1" width="5" height="1" fill="#868686"/><rect x="220" y="312.5" width="3" height="1" fill="#868686"/><rect x="220" y="317.9" width="3" height="1" fill="#868686"/><rect x="220" y="323.3" width="3" height="1" fill="#868686"/><rect x="209" y="328.8" width="14" height="1" fill="#8a8a8a"/><rect x="220" y="334.2" width="3" height="1" fill="#868686"/><rect x="220" y="339.6" width="3" height="1" fill="#868686"/><rect x="220" y="345.0" width="3" height="1" fill="#868686"/><rect x="218" y="350.4" width="5" height="1" fill="#868686"/><rect x="220" y="355.8" width="3" height="1" fill="#868686"/><rect x="220" y="361.2" width="3" height="1" fill="#868686"/><rect x="220" y="366.6" width="3" height="1" fill="#868686"/><rect x="209" y="372.0" width="14" height="1" fill="#8a8a8a"/><rect x="220" y="377.4" width="3" height="1" fill="#868686"/><rect x="220" y="382.8" width="3" height="1" fill="#868686"/><rect x="220" y="388.2" width="3" height="1" fill="#868686"/><rect x="218" y="393.6" width="5" height="1" fill="#868686"/><rect x="220" y="399.0" width="3" height="1" fill="#868686"/><rect x="220" y="404.4" width="3" height="1" fill="#868686"/><rect x="220" y="409.8" width="3" height="1" fill="#868686"/><rect x="209" y="415.2" width="14" height="1" fill="#8a8a8a"/><rect x="220" y="420.7" width="3" height="1" fill="#868686"/><rect x="220" y="426.1" width="3" height="1" fill="#868686"/><rect x="220" y="431.5" width="3" height="1" fill="#868686"/><rect x="218" y="436.9" width="5" height="1" fill="#868686"/><rect x="220" y="442.3" width="3" height="1" fill="#868686"/><rect x="220" y="447.7" width="3" height="1" fill="#868686"/><rect x="220" y="453.1" width="3" height="1" fill="#868686"/><rect x="209" y="458.5" width="14" height="1" fill="#8a8a8a"/><rect x="220" y="463.9" width="3" height="1" fill="#868686"/><rect x="220" y="469.3" width="3" height="1" fill="#868686"/><rect x="220" y="474.7" width="3" height="1" fill="#868686"/><rect x="218" y="480.1" width="5" height="1" fill="#868686"/><rect x="220" y="485.5" width="3" height="1" fill="#868686"/><rect x="220" y="490.9" width="3" height="1" fill="#868686"/><rect x="220" y="496.3" width="3" height="1" fill="#868686"/><rect x="209" y="501.8" width="14" height="1" fill="#8a8a8a"/><rect x="220" y="507.2" width="3" height="1" fill="#868686"/><rect x="220" y="512.6" width="3" height="1" fill="#868686"/><rect x="220" y="518.0" width="3" height="1" fill="#868686"/><rect x="218" y="523.4" width="5" height="1" fill="#868686"/><rect x="220" y="528.8" width="3" height="1" fill="#868686"/><rect x="220" y="534.2" width="3" height="1" fill="#868686"/><rect x="220" y="539.6" width="3" height="1" fill="#868686"/><rect x="209" y="545.0" width="14" height="1" fill="#8a8a8a"/><rect x="220" y="550.4" width="3" height="1" fill="#868686"/><rect x="220" y="555.8" width="3" height="1" fill="#868686"/><rect x="220" y="561.2" width="3" height="1" fill="#868686"/><rect x="218" y="566.6" width="5" height="1" fill="#868686"/><rect x="220" y="572.0" width="3" height="1" fill="#868686"/><rect x="220" y="577.4" width="3" height="1" fill="#868686"/><rect x="220" y="582.8" width="3" height="1" fill="#868686"/><rect x="209" y="588.2" width="14" height="1" fill="#8a8a8a"/><rect x="220" y="593.7" width="3" height="1" fill="#868686"/><rect x="220" y="599.1" width="3" height="1" fill="#868686"/><rect x="220" y="604.5" width="3" height="1" fill="#868686"/><rect x="218" y="609.9" width="5" height="1" fill="#868686"/><rect x="220" y="615.3" width="3" height="1" fill="#868686"/><rect x="220" y="620.7" width="3" height="1" fill="#868686"/><rect x="220" y="626.1" width="3" height="1" fill="#868686"/><rect x="209" y="631.5" width="14" height="1" fill="#8a8a8a"/><rect x="220" y="636.9" width="3" height="1" fill="#868686"/><rect x="220" y="642.3" width="3" height="1" fill="#868686"/><rect x="220" y="647.7" width="3" height="1" fill="#868686"/><rect x="218" y="653.1" width="5" height="1" fill="#868686"/><rect x="220" y="658.5" width="3" height="1" fill="#868686"/><rect x="220" y="663.9" width="3" height="1" fill="#868686"/><rect x="220" y="669.3" width="3" height="1" fill="#868686"/><rect x="209" y="674.8" width="14" height="1" fill="#8a8a8a"/><rect x="220" y="680.2" width="3" height="1" fill="#868686"/><rect x="220" y="685.6" width="3" height="1" fill="#868686"/><rect x="220" y="691.0" width="3" height="1" fill="#868686"/><rect x="218" y="696.4" width="5" height="1" fill="#868686"/><rect x="220" y="701.8" width="3" height="1" fill="#868686"/><rect x="220" y="707.2" width="3" height="1" fill="#868686"/><rect x="220" y="712.6" width="3" height="1" fill="#868686"/><rect x="209" y="718.0" width="14" height="1" fill="#8a8a8a"/><rect x="220" y="723.4" width="3" height="1" fill="#868686"/><rect x="220" y="728.8" width="3" height="1" fill="#868686"/><rect x="220" y="734.2" width="3" height="1" fill="#868686"/><rect x="218" y="739.6" width="5" height="1" fill="#868686"/><rect x="220" y="745.0" width="3" height="1" fill="#868686"/><rect x="220" y="750.4" width="3" height="1" fill="#868686"/><rect x="220" y="755.8" width="3" height="1" fill="#868686"/><rect x="209" y="761.2" width="14" height="1" fill="#8a8a8a"/><rect x="220" y="766.7" width="3" height="1" fill="#868686"/><rect x="220" y="772.1" width="3" height="1" fill="#868686"/><rect x="220" y="777.5" width="3" height="1" fill="#868686"/><rect x="218" y="782.9" width="5" height="1" fill="#868686"/><rect x="220" y="788.3" width="3" height="1" fill="#868686"/><rect x="220" y="793.7" width="3" height="1" fill="#868686"/><rect x="220" y="799.1" width="3" height="1" fill="#868686"/><rect x="209" y="804.5" width="14" height="1" fill="#8a8a8a"/><rect x="220" y="809.9" width="3" height="1" fill="#868686"/><rect x="220" y="815.3" width="3" height="1" fill="#868686"/><rect x="220" y="820.7" width="3" height="1" fill="#868686"/><rect x="218" y="826.1" width="5" height="1" fill="#868686"/><rect x="220" y="831.5" width="3" height="1" fill="#868686"/><rect x="220" y="836.9" width="3" height="1" fill="#868686"/><rect x="220" y="842.3" width="3" height="1" fill="#868686"/><rect x="209" y="847.8" width="14" height="1" fill="#8a8a8a"/><rect x="220" y="853.2" width="3" height="1" fill="#868686"/><rect x="220" y="858.6" width="3" height="1" fill="#868686"/><rect x="220" y="864.0" width="3" height="1" fill="#868686"/><rect x="218" y="869.4" width="5" height="1" fill="#868686"/><rect x="220" y="874.8" width="3" height="1" fill="#868686"/></svg>
<div class="abs" style="left:222px;top:147px;width:1163px;height:1px;background:#949494;opacity:1"></div>
<div class="abs" style="left:222px;top:148px;width:1px;height:733px;background:#949494;opacity:1"></div>
<span class="t rl" style="left:257.9px;top:133px">1</span>
<span class="t rl" style="left:301.2px;top:133px">0</span>
<span class="t rl" style="left:344.4px;top:133px">1</span>
<span class="t rl" style="left:387.7px;top:133px">2</span>
<span class="t rl" style="left:430.9px;top:133px">3</span>
<span class="t rl" style="left:474.2px;top:133px">4</span>
<span class="t rl" style="left:517.5px;top:133px">5</span>
<span class="t rl" style="left:560.7px;top:133px">6</span>
<span class="t rl" style="left:604.0px;top:133px">7</span>
<span class="t rl" style="left:647.2px;top:133px">8</span>
<span class="t rl" style="left:690.5px;top:133px">9</span>
<span class="t rl" style="left:733.7px;top:133px">10</span>
<span class="t rl" style="left:777.0px;top:133px">11</span>
<span class="t rl" style="left:820.2px;top:133px">12</span>
<span class="t rl" style="left:863.5px;top:133px">13</span>
<span class="t rl" style="left:906.7px;top:133px">14</span>
<span class="t rl" style="left:950.0px;top:133px">15</span>
<span class="t rl" style="left:993.2px;top:133px">16</span>
<span class="t rl" style="left:1036.5px;top:133px">17</span>
<span class="t rl" style="left:1079.7px;top:133px">18</span>
<span class="t rl" style="left:1123.0px;top:133px">19</span>
<span class="t rl" style="left:1166.2px;top:133px">20</span>
<span class="t rl" style="left:1209.5px;top:133px">21</span>
<span class="t rl" style="left:1252.7px;top:133px">22</span>
<span class="t rl" style="left:1296.0px;top:133px">23</span>
<span class="t rl" style="left:1339.2px;top:133px">24</span>
<span class="t rl" style="left:1382.5px;top:133px">:</span>
<span class="t rl" style="left:211px;top:158.8px">1</span>
<span class="t rl" style="left:211px;top:202.0px">0</span>
<span class="t rl" style="left:211px;top:245.2px">1</span>
<span class="t rl" style="left:211px;top:288.5px">2</span>
<span class="t rl" style="left:211px;top:331.8px">3</span>
<span class="t rl" style="left:211px;top:375.0px">4</span>
<span class="t rl" style="left:211px;top:418.2px">5</span>
<span class="t rl" style="left:211px;top:461.5px">6</span>
<span class="t rl" style="left:211px;top:504.8px">7</span>
<span class="t rl" style="left:211px;top:548.0px">8</span>
<span class="t rl" style="left:211px;top:591.2px">9</span>
<span class="t rl" style="left:211px;top:633.0px">1</span>
<span class="t rl" style="left:211px;top:641.0px">0</span>
<span class="t rl" style="left:211px;top:676.2px">1</span>
<span class="t rl" style="left:211px;top:684.2px">1</span>
<span class="t rl" style="left:211px;top:719.5px">1</span>
<span class="t rl" style="left:211px;top:727.5px">2</span>
<span class="t rl" style="left:211px;top:762.8px">1</span>
<span class="t rl" style="left:211px;top:770.8px">3</span>
<span class="t rl" style="left:211px;top:806.0px">1</span>
<span class="t rl" style="left:211px;top:814.0px">4</span>
<span class="t rl" style="left:211px;top:849.2px">1</span>
<span class="t rl" style="left:211px;top:857.2px">5</span>
<style>.rl{font-size:9px;color:#c6c6c6;text-shadow:0 0 .6px rgba(200,200,200,.5)}</style>
<div class="abs" style="left:299px;top:199px;width:1008px;height:630px;background:#e9e9e9;box-shadow:0 0 0 1px #1c1c1c"></div>
<div class="abs" style="left:1385px;top:132px;width:15px;height:749px;background:linear-gradient(90deg,#404040,#4a4a4a 50%,#484848)"></div>
<div class="abs" style="left:455px;top:881px;width:930px;height:14px;background:linear-gradient(#404040,#494949 60%,#474747)"></div>
<div class="abs" style="left:1385px;top:881px;width:15px;height:14px;background:#525252"></div>
<svg style="left:1388px;top:884px" width="10" height="10" viewBox="0 0 10 10"><path d="M9 1L1 9M9 4L4 9M9 7L7 9" stroke="#6a6a6a" stroke-width="1"/></svg>
<div class="abs" style="left:208px;top:881px;width:43px;height:14px;background:#353535"></div>
<div class="abs" style="left:251px;top:881px;width:204px;height:14px;background:#515151"></div>
<span class="t" style="left:214px;top:883.500px;font-size:9px;color:#dadada">66.67%</span>
<div class="abs" style="left:254px;top:883px;width:16px;height:10px;background:#cfcfcf;border-radius:2px"></div>
<div class="abs" style="left:256px;top:885px;width:5px;height:6px;background:#3a3a3a;border-radius:50%"></div><div class="abs" style="left:263px;top:885px;width:5px;height:6px;background:#3a3a3a;border-radius:50%"></div>
<svg style="left:275px;top:882px" width="13" height="12" viewBox="0 0 13 12"><path d="M5 2.500H1.500V10.500H9.500V8" fill="none" stroke="#d6d6d6" stroke-width="1.400"/><path d="M4.500 8c.5-3 2-4.500 4.500-4.500V1.500l3.500 3.200L9 8V6c-2 0-3.500.5-4.500 2z" fill="#d6d6d6"/></svg>
<span class="t" style="left:331px;top:884px;font-size:8.800px;color:#dadada">Doc: 5.05M/9.84M</span>
<svg style="left:446px;top:884px" width="7" height="9" viewBox="0 0 7 9"><path d="M0 0L6.500 4.500L0 9Z" fill="#e4e4e4"/></svg>
<!-- painted strokes -->
<svg style="left:0;top:0" width="1680" height="945" viewBox="0 0 1680 945">
<defs><filter id="bl" x="-5%" y="-5%" width="110%" height="110%"><feGaussianBlur stdDeviation="1.1"/></filter><filter id="bl2" x="-5%" y="-5%" width="110%" height="110%"><feGaussianBlur stdDeviation="2.200"/></filter>
<linearGradient id="gA" x1="0" x2="1"><stop offset="0" stop-color="#44705c"/><stop offset="1" stop-color="#4a7d77"/></linearGradient>
<linearGradient id="gB" x1="0" x2="1"><stop offset="0" stop-color="#4a7f7d"/><stop offset="1" stop-color="#4a8792"/></linearGradient>
<linearGradient id="gC" x1="0" x2="1"><stop offset="0" stop-color="#5a949a"/><stop offset=".45" stop-color="#5b939c"/><stop offset=".62" stop-color="#5e8aa4"/><stop offset=".85" stop-color="#6384ac"/><stop offset="1" stop-color="#6880b0"/></linearGradient>
<linearGradient id="gV" x1="0" y1="0" x2="0" y2="1"><stop offset="0" stop-color="#b8bbea" stop-opacity=".25"/><stop offset=".5" stop-color="#989cdc" stop-opacity=".8"/><stop offset="1" stop-color="#8c90d2"/></linearGradient>
</defs>
<g filter="url(#bl)">
<rect x="787" y="432" width="47" height="168" rx="6" fill="#4d7352"/>
<rect x="843" y="431" width="47" height="167" rx="6" fill="#3f6340"/>
<rect x="880" y="577" width="41" height="21" rx="5" fill="#466b45"/>
<rect x="782" y="440" width="18" height="134" rx="5" fill="#4a6f50"/>
<rect x="786" y="444" width="83" height="146" rx="7" fill="#3a5a38"/>
<rect x="845" y="433" width="43" height="37" rx="6" fill="#395a39"/>
<rect x="866" y="444" width="42" height="147" rx="5" fill="#44705c"/>
<rect x="884" y="434" width="34" height="36" rx="5" fill="#477566"/>
<rect x="898" y="444" width="55" height="145" rx="5" fill="url(#gA)"/>
<rect x="915" y="433" width="32" height="19" rx="4" fill="#5d947f"/>
<rect x="925" y="441" width="53" height="14" rx="4" fill="#52887a"/>
<rect x="948" y="447" width="36" height="141" rx="5" fill="url(#gB)"/>
<rect x="950" y="560" width="33" height="29" rx="4" fill="#4b8794"/>
<rect x="977" y="434" width="65" height="163" rx="7" fill="url(#gC)"/>
<rect x="1078" y="447" width="27" height="154" rx="5" fill="#7a9cc0"/>
<rect x="1060" y="575" width="42" height="27" rx="5" fill="#7898be"/>
<rect x="1075" y="443" width="17" height="27" rx="4" fill="#84a4cc"/>
<rect x="1027" y="445" width="61" height="151" rx="8" fill="#6a7cb4"/>
</g>
<g filter="url(#bl)">
<rect x="742" y="668" width="58" height="82" rx="6" fill="#3a5a38"/>
<rect x="747" y="660" width="53" height="104" rx="6" fill="#3a5b39"/>
<rect x="757" y="656" width="55" height="44" rx="5" fill="#3c5e3b"/>
<rect x="772" y="700" width="86" height="68" rx="5" fill="#3a5a38"/>
<rect x="804" y="646" width="44" height="34" rx="5" fill="#3c5e3a"/>
<rect x="815" y="740" width="43" height="37" rx="5" fill="#3c5e3a"/>
<rect x="785" y="664" width="73" height="102" rx="5" fill="#5063a0"/>
<rect x="785" y="664" width="27" height="36" rx="4" fill="#5870b0" opacity="0.6"/>
<rect x="800" y="740" width="58" height="28" rx="5" fill="#5560c4" opacity="0.8"/>
<rect x="840" y="656" width="42" height="108" rx="4" fill="#6066dc"/>
<rect x="856" y="687" width="40" height="75" rx="5" fill="#5f66d0"/>
<rect x="846" y="720" width="47" height="44" rx="5" fill="#5a66c2" opacity="0.8"/>
<rect x="892" y="691" width="17" height="76" rx="3" fill="url(#gV)"/>
<rect x="872" y="744" width="30" height="23" rx="4" fill="#8a8fd4" opacity="0.65"/>
<rect x="800" y="690" width="60" height="76" rx="5" fill="#4f629c" opacity="0.55"/>
<rect x="813" y="675" width="44" height="32" rx="6" fill="#3f6047"/>
</g>
</svg>
<!-- Kuler panel -->
<div class="abs" style="left:585px;top:217px;width:196px;height:446px;background:#545454;border-radius:4px 4px 0 0;box-shadow:0 0 0 1px #2c2c2c,0 1px 4px rgba(0,0,0,.5)"></div>
<div class="abs" style="left:585px;top:217px;width:196px;height:13px;background:#343434;border-radius:4px 4px 0 0"></div>
<svg style="left:754px;top:221px" width="8" height="6" viewBox="0 0 8 6"><path d="M3.500 0L0 3L3.500 6ZM7.500 0L4 3L7.500 6Z" fill="#d8d8d8"/></svg>
<svg style="left:768px;top:221px" width="7" height="6" viewBox="0 0 7 6"><path d="M.5 0L6.500 6M6.500 0L.5 6" stroke="#d8d8d8" stroke-width="1.600"/></svg>
<div class="abs" style="left:585px;top:230px;width:196px;height:15px;background:#3d3d3d"></div>
<div class="abs" style="left:585px;top:230px;width:37px;height:16px;background:#545454;border-radius:0"></div>
<span class="t" style="left:592px;top:232.500px;font-size:9.500px;font-weight:bold;color:#dadada;letter-spacing:-.45px">Kuler</span>
<svg style="left:763px;top:234px" width="13" height="9" viewBox="0 0 13 9"><path d="M0 2.500H5L2.500 5.500Z" fill="#d0d0d0"/><rect x="5.500" y="0" width="7.500" height="8.500" fill="#909090"/></svg>
<div class="abs" style="left:585px;top:245px;width:196px;height:1px;background:#454545"></div>
<!-- tab buttons -->
<div class="abs" style="left:606px;top:250px;width:155px;height:18px;border-radius:3px;background:#3c3c3c"></div>
<div class="abs" style="left:607px;top:251px;width:50px;height:16px;border-radius:2px 0 0 2px;background:linear-gradient(#6a6a6a,#5a5a5a)"></div>
<div class="abs" style="left:658px;top:251px;width:51px;height:16px;background:linear-gradient(#6a6a6a,#5a5a5a)"></div>
<div class="abs" style="left:710px;top:251px;width:50px;height:16px;border-radius:0 2px 2px 0;background:linear-gradient(#3e3e3e,#484848)"></div>
<span class="t kb" style="left:620.500px">About</span>
<span class="t kb" style="left:668.500px">Browse</span>
<span class="t kb" style="left:722px">Create</span>
<style>.kb{top:254.500px;font-size:9.300px;color:#ececec;letter-spacing:-.2px}</style>
<div class="abs" style="left:586px;top:273px;width:194px;height:1px;background:#444"></div>
<div class="abs" style="left:586px;top:274px;width:194px;height:1px;background:#5e5e5e"></div>
<span class="t" style="left:591px;top:283px;font-size:9.300px;color:#ececec;letter-spacing:-.55px">Select Rule:</span>
<div class="abs" style="left:642px;top:279px;width:130px;height:15px;border-radius:3px;background:linear-gradient(#666,#5a5a5a);border:1px solid #484848"></div>
<span class="t" style="left:648px;top:281px;font-size:9.300px;color:#ececec;letter-spacing:-.3px">Custom</span>
<svg style="left:762px;top:282px" width="5" height="9" viewBox="0 0 5 9"><path d="M0 3.500L2.500 .5L5 3.500ZM0 5.500H5L2.500 8.500Z" fill="#d8d8d8"/></svg>
<!-- colour wheel -->
<div class="abs" style="left:593px;top:302px;width:155px;height:155px;border-radius:50%;background:#f3efea"></div>
<div class="abs" style="left:596px;top:305px;width:149px;height:149px;border-radius:50%;background:radial-gradient(circle closest-side,rgba(255,255,255,.92) 0,rgba(255,255,255,.68) 20%,rgba(255,255,255,.36) 48%,rgba(255,255,255,.13) 73%,rgba(255,255,255,0) 93%),conic-gradient(from 0deg,#f8b414 0deg,#f89418 30deg,#fb6a1c 58deg,#ff3a20 82deg,#ff2a30 95deg,#ff30a0 118deg,#f03ce6 138deg,#a83cf4 158deg,#3c30f6 180deg,#2c70f4 200deg,#20c4f2 225deg,#28e0c8 246deg,#18cc40 268deg,#22c818 285deg,#8ed61c 312deg,#e8e01c 332deg,#f6c814 350deg,#f8b414 360deg)"></div>
<svg style="left:585px;top:295px" width="200" height="170" viewBox="585 295 200 170">
  <path d="M671.300 378.600L684 350L706 358.500Z" fill="#e2c8a4" opacity=".5"/><path d="M671.300 378.600L706 358.500L700 381Z" fill="#f0c0a8" opacity=".4"/>
  <g stroke="#1c1c1c" stroke-width="1.100" fill="none">
    <path d="M671.300 378.600L684 348.500M671.300 378.600L708.500 357.500M671.300 378.600L705 381.700M671.300 378.600L649.700 392.700"/>
    <path d="M671.300 378.600L693 356.700" stroke="#8a6a50" stroke-width=".8"/>
    <circle cx="683.900" cy="348.400" r="4.200" fill="#b89a62"/>
    <circle cx="692.900" cy="356.700" r="4.200" fill="#be9a6a"/>
    <circle cx="708.700" cy="357.600" r="4.200" fill="#9a6a4a"/>
    <circle cx="649.700" cy="392.700" r="4.200" fill="#a6deda"/>
    <circle cx="705.100" cy="381.700" r="8" fill="#e98a88" stroke-width="1.300"/>
    <circle cx="705.100" cy="381.700" r="4.300" fill="#ec8a88" stroke-width="1.300"/>
  </g>
  <!-- cursor -->
  <path d="M695.600 348L695.600 361.500L698.700 358.800L701 364L703 363.100L700.800 358L704.800 358Z" fill="#f2f2f2" stroke="#8a8a8a" stroke-width=".7"/>
  <!-- sun -->
  <g stroke="#d6d6d6" stroke-width="1.100" fill="none"><circle cx="759.500" cy="313.800" r="3.200"/><path d="M759.500 306v2.500M759.500 319v2.500M751.700 313.800h2.500M764.800 313.800h2.500M754 308.300l1.800 1.800M763.200 317.500l1.800 1.800M765 308.300l-1.800 1.800M755.800 317.500l-1.800 1.800"/></g>
  <path d="M765 363L770 358.800V367.200Z" fill="#cfcfcf"/>
</svg>
<div class="abs" style="left:759px;top:326px;width:4px;height:124px;background:linear-gradient(#c89a6c,#8a6a4c 45%,#3c2c1e 80%,#0a0806)"></div>
<span class="t" style="left:661px;top:462.500px;font-size:9px;color:#ececec;letter-spacing:-.3px">Base Color</span>
<svg style="left:680px;top:475px" width="6" height="5" viewBox="0 0 6 5"><path d="M0 0H6L3 4.500Z" fill="#cfcfcf"/></svg>
<!-- swatches -->
<div class="abs" style="left:594px;top:481px;width:178px;height:37px;background:#3a3a3a"></div>
<div class="abs" style="left:595px;top:482px;width:35px;height:35px;background:linear-gradient(#8e5238,#854a33)"></div>
<div class="abs" style="left:630px;top:482px;width:35px;height:35px;background:#b88b68;border:1px solid #e8dccc;box-shadow:inset 0 0 0 1px #6a5440"></div>
<div class="abs" style="left:665px;top:482px;width:35px;height:35px;background:#e8817f"></div>
<div class="abs" style="left:700px;top:482px;width:35px;height:35px;background:#8fd9d8"></div>
<div class="abs" style="left:735px;top:482px;width:36px;height:35px;background:#b99b62"></div>
<!-- swatch tool icons -->
<svg style="left:620px;top:522px" width="130" height="14" viewBox="0 0 130 14">
 <g fill="#8c8c8c"><rect x="2" y="1" width="8" height="8" fill="none" stroke="#9a9a9a" stroke-width="1.200"/><rect x="4" y="3" width="4" height="4"/><rect x="5.500" y="5" width="7.500" height="7.500" fill="#777"/>
 <rect x="29" y="2" width="8" height="8" fill="#777"/><rect x="32" y="4.500" width="8.500" height="8.500" fill="none" stroke="#9a9a9a" stroke-width="1.200"/><rect x="34" y="6.500" width="4.500" height="4.500"/>
 <circle cx="62.500" cy="7.500" r="5" fill="none" stroke="#a0a0a0" stroke-width="1.300"/><circle cx="62.500" cy="7.500" r="2" fill="#a0a0a0"/>
 <rect x="88" y="2" width="8.500" height="9.500" fill="#7a7a7a"/><rect x="90" y="4" width="5" height="5" fill="#909090"/><path d="M84 9.500h5M86.500 7v5" stroke="#8a8a8a" stroke-width="1.200"/>
 <rect x="115" y="2" width="8.500" height="9.500" fill="#7a7a7a"/><rect x="117" y="4" width="5" height="5" fill="#a0a0a0"/><path d="M111 11h5" stroke="#a0a0a0" stroke-width="1.300"/></g>
</svg>
<!-- RGB sliders -->
<span class="t ks" style="left:591px;top:549.500px">R:</span>
<span class="t ks" style="left:591px;top:571px">G:</span>
<span class="t ks" style="left:591px;top:592.500px">B:</span>
<style>.ks{font-size:8.800px;color:#ececec;font-weight:bold;letter-spacing:-.2px}.kv{font-size:8.800px;color:#f0f0f0;letter-spacing:-.2px}</style>
<div class="abs" style="left:603px;top:552px;width:131px;height:4px;border-radius:2px;background:linear-gradient(90deg,#1a8a66,#6a8868 40%,#c08868 75%,#f48a66)"></div>
<div class="abs" style="left:603px;top:574px;width:131px;height:4px;border-radius:2px;background:linear-gradient(90deg,#c4205c,#c06064 35%,#bca866 70%,#b0ec6a)"></div>
<div class="abs" style="left:603px;top:595px;width:131px;height:4px;border-radius:2px;background:linear-gradient(90deg,#b88a12,#b8882c 25%,#b48890 60%,#b088f0)"></div>
<svg style="left:690px;top:557px" width="9" height="8" viewBox="0 0 9 8"><path d="M4.500 .5C6 1.500 8.500 4 8.500 6.500H.5C.5 4 3 1.500 4.500 .5Z" fill="#c8c8c8" stroke="#444" stroke-width=".6"/></svg>
<svg style="left:667.500px;top:578.500px" width="9" height="8" viewBox="0 0 9 8"><path d="M4.500 .5C6 1.500 8.500 4 8.500 6.500H.5C.5 4 3 1.500 4.500 .5Z" fill="#c8c8c8" stroke="#444" stroke-width=".6"/></svg>
<svg style="left:651px;top:600px" width="9" height="8" viewBox="0 0 9 8"><path d="M4.500 .5C6 1.500 8.500 4 8.500 6.500H.5C.5 4 3 1.500 4.500 .5Z" fill="#c8c8c8" stroke="#444" stroke-width=".6"/></svg>
<div class="abs" style="left:741px;top:546px;width:30px;height:16px;background:#3c3c3c;border:1px solid #4a4a4a"></div>
<div class="abs" style="left:741px;top:568px;width:30px;height:16px;background:#3c3c3c;border:1px solid #4a4a4a"></div>
<div class="abs" style="left:741px;top:589px;width:30px;height:16px;background:#3c3c3c;border:1px solid #4a4a4a"></div>
<span class="t kv" style="left:749.500px;top:550px">181</span>
<span class="t kv" style="left:749.500px;top:571.500px">136</span>
<span class="t kv" style="left:749.500px;top:593px">101</span>
<span class="t ks" style="left:694px;top:613px">Hex:</span>
<div class="abs" style="left:713px;top:609px;width:60px;height:20px;background:#3e3e3e;border:1px solid #6d8eb4;box-shadow:0 0 0 1px #405268"></div>
<div class="abs" style="left:729px;top:613.500px;width:29px;height:11px;background:#a9c3e6"></div>
<span class="t" style="left:730px;top:615px;font-size:8.500px;color:#44608a;letter-spacing:-.45px;text-shadow:none">B58865</span>
<!-- bottom bar -->
<div class="abs" style="left:586px;top:638px;width:194px;height:1px;background:#434343"></div>
<div class="abs" style="left:586px;top:639px;width:194px;height:1px;background:#606060"></div>
<svg style="left:678px;top:640px" width="72" height="14" viewBox="0 0 72 14"><g fill="#bdbdbd"><path d="M4.500 1h4v4h2.500L6.500 9 2 5h2.500zM1 9.500h11v3.500H1z"/><path d="M29 7.500h5M31.500 5v5" stroke="#bdbdbd" stroke-width="1.400"/><path d="M34 1.500h8v9h-6v-3h-2z" fill="none" stroke="#bdbdbd" stroke-width="1.200"/><path d="M38 1.500v9M34 4.500h8M36 7.500h6" stroke="#bdbdbd" stroke-width=".8"/><circle cx="61" cy="7.500" r="5" fill="#bdbdbd"/><path d="M65 2.500l3-2 1 4z"/><text x="58" y="10" font-size="6" font-family="Liberation Sans,sans-serif" fill="#545454" font-weight="bold">ku</text></g></svg>
<div class="abs" style="left:586px;top:656px;width:194px;height:6px;background:#4c4c4c;border-top:1px solid #424242"></div>
<div class="abs" style="left:675px;top:658px;width:16px;height:3px;background:repeating-linear-gradient(90deg,#3a3a3a 0 1px,transparent 1px 2px)"></div>
<svg style="left:770px;top:644px" width="8" height="8" viewBox="0 0 8 8"><path d="M7.500 1L1 7.500M7.500 4L4 7.500" stroke="#6a6a6a" stroke-width="1"/></svg>
<!-- Color panel -->
<div class="abs" style="left:1351px;top:184px;width:186px;height:114px;background:#545454;box-shadow:0 0 0 1px #3a3a3a"></div>
<div class="abs" style="left:1351px;top:185px;width:186px;height:15px;background:#3f3f3f"></div>
<div class="abs" style="left:1351px;top:184px;width:36px;height:17px;background:#545454"></div>
<span class="t" style="left:1357px;top:188.200px;font-size:9.300px;font-weight:bold;color:#dcdcdc;letter-spacing:-.2px">Color</span>
<svg style="left:1500px;top:188.500px" width="9" height="7" viewBox="0 0 9 7"><path d="M0 0L4 3.500L0 7ZM4.500 0L8.500 3.500L4.500 7Z" fill="#d0d0d0"/></svg>
<div class="abs" style="left:1514px;top:187px;width:2px;height:10px;background:#555"></div>
<svg style="left:1520px;top:188.500px" width="14" height="8" viewBox="0 0 14 8"><path d="M0 1.500H5L2.500 4.500Z" fill="#d0d0d0"/><path d="M6 1H14M6 3.500H14M6 6H14" stroke="#c4c4c4" stroke-width="1.200"/></svg>
<!-- swatches -->
<div class="abs" style="left:1365px;top:218px;width:17px;height:16px;background:#343434;border:1px solid #e4e4e4;box-shadow:0 0 0 1px #2c2c2c"></div>
<div class="abs" style="left:1356px;top:209px;width:17px;height:16px;background:#3c6640;border:1px solid #dce8d8;box-shadow:0 0 0 1px #2c2c2c"></div>
<style>.cl{font-size:9px;font-weight:bold;color:#e0e0e0}.cv{font-size:9px;color:#ececec;letter-spacing:-.2px}</style>
<span class="t cl" style="left:1389.500px;top:209.500px">H</span>
<span class="t cl" style="left:1389.500px;top:231px">S</span>
<span class="t cl" style="left:1390px;top:252.500px">B</span>
<div class="abs" style="left:1403px;top:208px;width:76px;height:6px;background:linear-gradient(90deg,#f03828,#f0a020 10%,#e8e020 18%,#38d028 33%,#20d0b8 50%,#2060e8 60%,#2018d0 68%,#c028e0 80%,#f02898 90%,#f03838);border:1px solid #4a4a4a"></div>
<div class="abs" style="left:1403px;top:229px;width:76px;height:6px;background:linear-gradient(90deg,#5c5f5c,#3c6a3e 50%,#0c6c10);border:1px solid #6a6a6a"></div>
<div class="abs" style="left:1403px;top:251px;width:76px;height:6px;background:linear-gradient(90deg,#0c0c0c,#1c241c 15%,#4c6c4e 50%,#92d094);border:1px solid #484848"></div>
<svg style="left:1423.500px;top:214px" width="9" height="8" viewBox="0 0 9 8"><path d="M4.500 .5C6 1.500 8.500 4 8.500 7H.5C.5 4 3 1.500 4.500 .5Z" fill="#c4c4c4" stroke="#484848" stroke-width=".6"/></svg>
<svg style="left:1429px;top:235.500px" width="9" height="8" viewBox="0 0 9 8"><path d="M4.500 .5C6 1.500 8.500 4 8.500 7H.5C.5 4 3 1.500 4.500 .5Z" fill="#c4c4c4" stroke="#484848" stroke-width=".6"/></svg>
<svg style="left:1426.500px;top:257px" width="9" height="8" viewBox="0 0 9 8"><path d="M4.500 .5C6 1.500 8.500 4 8.500 7H.5C.5 4 3 1.500 4.500 .5Z" fill="#c4c4c4" stroke="#484848" stroke-width=".6"/></svg>
<div class="abs" style="left:1485px;top:207px;width:30px;height:16px;background:#414141;border:1px solid #4a4a4a"></div>
<div class="abs" style="left:1485px;top:229px;width:30px;height:16px;background:#414141;border:1px solid #4a4a4a"></div>
<div class="abs" style="left:1485px;top:250px;width:30px;height:16px;background:#414141;border:1px solid #4a4a4a"></div>
<span class="t cv" style="left:1489px;top:211.500px">118</span>
<span class="t cv" style="left:1489px;top:233px">40</span>
<span class="t cv" style="left:1489px;top:254.500px">36</span>
<span class="t" style="left:1519.800px;top:210px;font-size:12px;font-weight:bold;color:#dcdcdc">°</span>
<span class="t" style="left:1517.500px;top:232.500px;font-size:8.500px;font-weight:bold;color:#e0e0e0">%</span>
<span class="t" style="left:1517.500px;top:254px;font-size:8.500px;font-weight:bold;color:#e0e0e0">%</span>
<!-- spectrum -->
<div class="abs" style="left:1354px;top:273px;width:168px;height:14px;background:linear-gradient(rgba(255,255,255,.9) 0,rgba(255,255,255,.3) 22%,rgba(255,255,255,0) 42%,rgba(0,0,0,0) 55%,rgba(0,0,0,.5) 78%,rgba(0,0,0,.96) 100%),linear-gradient(90deg,#ff2a1a 0,#ff8a10 6%,#ffe608 14%,#58d428 22%,#10b858 30%,#08b8a8 40%,#08a0e8 50%,#1850e0 60%,#3018b8 68%,#a818c0 76%,#f01890 82%,#ff2858 89%,#f84030 95%,#f85828 100%)"></div>
<div class="abs" style="left:1514px;top:273px;width:8px;height:7px;background:#f4f4f4"></div>
<div class="abs" style="left:1514px;top:280px;width:8px;height:7px;background:#0a0a0a"></div>
<div class="abs" style="left:1351px;top:290px;width:186px;height:8px;background:#4e4e4e;border-top:1px solid #434343"></div>
<div class="abs" style="left:1435px;top:293px;width:16px;height:3px;background:repeating-linear-gradient(90deg,#3a3a3a 0 1px,transparent 1px 2px)"></div>
<!-- Layers panel -->
<div class="abs" style="left:1238px;top:361px;width:301px;height:436px;background:#565656;box-shadow:-1px 1px 0 0 #1e1e1e,0 -1px 0 0 #2a2a2a,0 0 3px rgba(0,0,0,.4)"></div>
<div class="abs" style="left:1238px;top:364px;width:300px;height:15px;background:#3f3f3f"></div>
<div class="abs" style="left:1238px;top:362px;width:38.500px;height:18px;background:#565656"></div>
<span class="t" style="left:1244px;top:367.500px;font-size:9.300px;color:#e2e2e2;letter-spacing:-.4px">Layers</span>
<svg style="left:1501px;top:367.500px" width="9" height="7" viewBox="0 0 9 7"><path d="M0 0L4 3.500L0 7ZM4.500 0L8.500 3.500L4.500 7Z" fill="#d0d0d0"/></svg>
<div class="abs" style="left:1516px;top:365px;width:2px;height:11px;background:#555"></div>
<svg style="left:1521px;top:367.500px" width="14" height="8" viewBox="0 0 14 8"><path d="M0 1.500H5L2.500 4.500Z" fill="#d0d0d0"/><path d="M6 1H14M6 3.500H14M6 6H14" stroke="#c4c4c4" stroke-width="1.200"/></svg>
<!-- filter row -->
<div class="abs" style="left:1242px;top:383.500px;width:62px;height:16px;border-radius:3px;background:linear-gradient(#686868,#5a5a5a);border:1px solid #444"></div>
<svg style="left:1247px;top:385px" width="11" height="12" viewBox="0 0 11 12"><circle cx="6.500" cy="4.500" r="3.200" fill="none" stroke="#dcdcdc" stroke-width="1.500"/><path d="M4.300 6.800L1 10.500" stroke="#dcdcdc" stroke-width="1.800"/></svg>
<span class="t" style="left:1261.500px;top:386.500px;font-size:9.300px;color:#e6e6e6;letter-spacing:-.2px">Kind</span>
<svg style="left:1294.500px;top:387px" width="5" height="9" viewBox="0 0 5 9"><path d="M0 3.500L2.500 .5L5 3.500ZM0 5.500H5L2.500 8.500Z" fill="#dcdcdc"/></svg>
<svg style="left:1314px;top:384px" width="125" height="16" viewBox="0 0 125 16">
 <g fill="#d8d8d8"><rect x="1" y="2.500" width="11.500" height="10" fill="none" stroke="#d8d8d8" stroke-width="1.300"/><path d="M2.500 11l3-3.500 2 2 1.500-1.500 2.500 3z"/><circle cx="9.500" cy="5.500" r="1"/>
 <circle cx="28" cy="7.500" r="4.800" fill="none" stroke="#d8d8d8" stroke-width="1.300"/><path d="M31.300 4.200A4.700 4.700 0 0 1 24.700 10.800Z" transform="rotate(90 28 7.500)"/>
 <path d="M44.500 2.500h10.500v3h-1.200l-.5-1.500h-2.300v8l1.500.5v1h-5.500v-1l1.500-.5v-8h-2.300l-.5 1.500h-1.200z"/>
 <rect x="67.500" y="3.500" width="8" height="8" fill="none" stroke="#d8d8d8" stroke-width="1.300"/><rect x="65.500" y="1.500" width="3.500" height="3.500"/><rect x="74" y="1.500" width="3.500" height="3.500"/><rect x="65.500" y="10" width="3.500" height="3.500"/><rect x="74" y="10" width="3.500" height="3.500"/>
 <path d="M91 1.500h5l3 3v8.500h-8z" fill="none" stroke="#d8d8d8" stroke-width="1.300"/><path d="M96 1.500v3h3"  fill="none" stroke="#d8d8d8" stroke-width="1"/><rect x="88" y="8" width="5.500" height="6"/></g>
 <rect x="111.500" y="1" width="6" height="14" rx="1.500" fill="#414141"/><rect x="112" y="1.500" width="5" height="6" rx="1" fill="#7a7a7a"/>
</svg>
<div class="abs" style="left:1238px;top:404px;width:300px;height:1px;background:#474747"></div><div class="abs" style="left:1238px;top:405px;width:300px;height:1px;background:#5c5c5c"></div>
<!-- blend row -->
<div class="abs" style="left:1242px;top:408px;width:98px;height:17px;border-radius:3px;background:linear-gradient(#686868,#5a5a5a);border:1px solid #444"></div>
<span class="t" style="left:1248px;top:412px;font-size:9.500px;color:#e6e6e6">Normal</span>
<svg style="left:1331px;top:412px" width="5" height="9" viewBox="0 0 5 9"><path d="M0 3.500L2.500 .5L5 3.500ZM0 5.500H5L2.500 8.500Z" fill="#dcdcdc"/></svg>
<span class="t" style="left:1347px;top:411px;font-size:9.500px;color:#e6e6e6;letter-spacing:-.2px">Opacity:</span>
<div class="abs" style="left:1385px;top:408px;width:32px;height:17px;background:#3a3a3a;border-radius:2px 0 0 2px"></div>
<div class="abs" style="left:1417px;top:408px;width:16px;height:17px;background:#6a6a6a;border-radius:0 2px 2px 0"></div>
<span class="t" style="left:1390px;top:412px;font-size:9.500px;color:#ececec;letter-spacing:-.2px">100%</span>
<svg style="left:1422px;top:415px" width="6" height="4" viewBox="0 0 6 4"><path d="M0 0H6L3 3.500Z" fill="#e6e6e6"/></svg>
<div class="abs" style="left:1238px;top:428px;width:300px;height:1px;background:#474747"></div><div class="abs" style="left:1238px;top:429px;width:300px;height:1px;background:#5c5c5c"></div>
<!-- lock row -->
<span class="t" style="left:1243px;top:438px;font-size:9.500px;color:#e6e6e6;letter-spacing:-.2px">Lock:</span>
<svg style="left:1270px;top:433px" width="80" height="18" viewBox="0 0 80 18">
 <rect x="2" y="4" width="10" height="10" fill="#cfcfcf"/><path d="M4.500 4v10M7 4v10M9.500 4v10M2 6.500h10M2 9h10M2 11.500h10" stroke="#777" stroke-width=".01"/><g fill="#6e6e6e"><rect x="3" y="5" width="2.700" height="2.700"/><rect x="8.300" y="5" width="2.700" height="2.700"/><rect x="5.700" y="7.700" width="2.600" height="2.600"/><rect x="3" y="10.300" width="2.700" height="2.700"/><rect x="8.300" y="10.300" width="2.700" height="2.700"/></g>
 <g fill="#e0e0e0"><path d="M33.500 2.500L35 3.700L27.500 12L25.800 10.700Z"/><path d="M25.300 11.200l2 1.600c-.7 2.300-4 3-6.800 2.300 2-.8 2.800-3 4.800-3.900z"/>
 <path d="M47.500 2.500l2.300 3h-1.600v2.800h2.800V6.700l3 2.300-3 2.300V9.700h-2.800v2.800h1.600l-2.300 3-2.300-3h1.600V9.700h-2.800v1.600l-3-2.300 3-2.300v1.600h2.800V5.500h-1.600z"/>
 <path d="M64.500 8V6a3.200 3.200 0 0 1 6.400 0v2h1.100v6.500h-8.600V8zM66.200 8h3V6a1.500 1.500 0 0 0-3 0z"/></g><circle cx="67.700" cy="11" r="1.100" fill="#555"/>
</svg>
<span class="t" style="left:1367px;top:437px;font-size:9.500px;color:#e6e6e6;letter-spacing:-.1px">Fill:</span>
<div class="abs" style="left:1385px;top:433px;width:32px;height:17px;background:#3a3a3a;border-radius:2px 0 0 2px"></div>
<div class="abs" style="left:1417px;top:433px;width:16px;height:17px;background:#6a6a6a;border-radius:0 2px 2px 0"></div>
<span class="t" style="left:1390px;top:437px;font-size:9.500px;color:#ececec;letter-spacing:-.2px">100%</span>
<svg style="left:1422px;top:440px" width="6" height="4" viewBox="0 0 6 4"><path d="M0 0H6L3 3.500Z" fill="#e6e6e6"/></svg>
<!-- layer list -->
<div class="abs" style="left:1238px;top:454px;width:300px;height:1px;background:#3c3c3c"></div>
<div class="abs" style="left:1238px;top:455px;width:287px;height:318px;background:#4a4a4a"></div>
<div class="abs" style="left:1525px;top:455px;width:13px;height:318px;background:#464646;border-left:1px solid #3c3c3c"></div>
<div class="abs" style="left:1238px;top:455px;width:27px;height:57px;background:#505050"></div>
<div class="abs" style="left:1265px;top:455px;width:260px;height:57px;background:#6b7c93;border-left:1px solid #5a6678"></div>
<div class="abs" style="left:1238px;top:512px;width:287px;height:1px;background:#3e3e3e"></div>
<div class="abs" style="left:1238px;top:513px;width:27px;height:57px;background:#505050"></div>
<div class="abs" style="left:1265px;top:513px;width:260px;height:57px;background:#545454;border-left:1px solid #464646"></div>
<div class="abs" style="left:1238px;top:570px;width:287px;height:1px;background:#3e3e3e"></div>
<!-- eyes -->
<svg style="left:1245px;top:479px" width="13" height="10" viewBox="0 0 13 10"><path d="M.5 5C3 0 10 0 12.500 5C10 9.500 3 9.500 .5 5Z" fill="#e4e4e4"/><circle cx="6.500" cy="4.500" r="2.400" fill="#444"/><circle cx="7.300" cy="3.600" r=".8" fill="#ddd"/></svg>
<svg style="left:1245px;top:536px" width="13" height="10" viewBox="0 0 13 10"><path d="M.5 5C3 0 10 0 12.500 5C10 9.500 3 9.500 .5 5Z" fill="#e4e4e4"/><circle cx="6.500" cy="4.500" r="2.400" fill="#444"/><circle cx="7.300" cy="3.600" r=".8" fill="#ddd"/></svg>
<!-- layer 1 thumb -->
<div class="abs" style="left:1266.500px;top:466px;width:54px;height:36.500px;border:1.500px solid #dfe5ee"></div>
<div class="abs" style="left:1284px;top:465px;width:19px;height:39px;background:#6b7c93"></div>
<div class="abs" style="left:1266px;top:476px;width:56px;height:17px;background:#6b7c93"></div>
<div class="abs" style="left:1268px;top:468px;width:51px;height:33px;background:#ececec;border:1px solid #1c1c1c"></div>
<div class="abs" style="left:1292.500px;top:480.500px;width:15.500px;height:7.500px;background:linear-gradient(90deg,#38583a,#4a7c70 55%,#6480a8);filter:blur(.4px)"></div>
<div class="abs" style="left:1291px;top:491px;width:7.500px;height:5.500px;border-radius:2px;background:linear-gradient(90deg,#3e5c58,#4c62a4);filter:blur(.4px)"></div>
<span class="t" style="left:1328px;top:481.500px;font-size:9.300px;color:#f0f0f0;letter-spacing:-.2px">Layer 1</span>
<!-- background thumb -->
<div class="abs" style="left:1268px;top:524px;width:51px;height:33px;background:#ececec;border:1px solid #1c1c1c"></div>
<div class="abs" style="left:1278px;top:536px;width:5px;height:16px;border-radius:1.500px;background:linear-gradient(#e85848,#c050a0 55%,#6058d8);filter:blur(.4px)"></div>
<div class="abs" style="left:1286px;top:530px;width:18px;height:7px;border-radius:1px;background:linear-gradient(90deg,#f08820,#e8d820 18%,#40c838 36%,#20b8c8 52%,#3048e0 68%,#c030d0 84%,#f03048);filter:blur(.4px)"></div>
<div class="abs" style="left:1300px;top:532px;width:4px;height:9px;background:#e84058;filter:blur(.4px)"></div>
<div class="abs" style="left:1291px;top:541px;width:9px;height:6px;border-radius:2px 2px 5px 5px;background:#9a9498;filter:blur(.5px)"></div>
<div class="abs" style="left:1307px;top:529px;width:5px;height:24px;border-radius:1.500px;background:linear-gradient(#c04048,#7a3038 60%,#3a2428);filter:blur(.4px)"></div>
<div class="abs" style="left:1311px;top:540.500px;width:4px;height:1px;background:#8a8a8a"></div>
<span class="t" style="left:1328px;top:538px;font-size:9.300px;color:#f0f0f0;font-style:italic;letter-spacing:-.2px">Background</span>
<svg style="left:1500px;top:535px" width="10" height="12" viewBox="0 0 10 12"><path d="M2.500 5V3.500a2.500 2.500 0 0 1 5 0V5" fill="none" stroke="#c8c8c8" stroke-width="1.200"/><rect x="1" y="5" width="8" height="6" fill="none" stroke="#c8c8c8" stroke-width="1.200"/><rect x="4.300" y="7" width="1.400" height="2.200" fill="#c8c8c8"/></svg>
<!-- bottom bar -->
<div class="abs" style="left:1238px;top:773px;width:300px;height:1px;background:#3e3e3e"></div>
<div class="abs" style="left:1238px;top:774px;width:300px;height:16px;background:#545454;border-top:1px solid #5e5e5e"></div>
<svg style="left:1354px;top:775px" width="164" height="15" viewBox="0 0 164 15">
 <g fill="none" stroke="#9c9c9c" stroke-width="1.300"><rect x="1.500" y="4.500" width="7" height="5" rx="2.500"/><rect x="6.500" y="4.500" width="7" height="5" rx="2.500"/></g>
 <text x="27" y="11.500" font-family="Liberation Serif,serif" font-style="italic" font-size="12.500" fill="#dcdcdc" font-weight="bold">fx</text><path d="M38.500 10.500h3l-1.500 2z" fill="#dcdcdc"/>
 <rect x="51" y="2.500" width="12" height="9.500" fill="#d6d6d6"/><circle cx="57" cy="7.200" r="2.600" fill="#545454"/>
 <circle cx="80.500" cy="7" r="4.800" fill="#d6d6d6"/><path d="M83.900 3.600A4.800 4.800 0 0 1 77.100 10.400Z" fill="#545454" transform="rotate(180 80.500 7)"/><circle cx="80.500" cy="7" r="4.800" fill="none" stroke="#d6d6d6" stroke-width="1"/><path d="M87 10.500h3l-1.500 2z" fill="#dcdcdc"/>
 <path d="M99.500 2h4.500l1.500 1.500h5.500v8h-11.500z" fill="#d6d6d6"/>
 <path d="M125 2.500h9v9.500h-5.500l-3.500-3.500z" fill="#d6d6d6"/><path d="M125 8.500h3.500v3.500z" fill="#545454"/>
 <path d="M148.500 4h9M151 4V2.500h4V4" stroke="#d6d6d6" stroke-width="1.200" fill="none"/><path d="M149.500 5.500h7l-.7 7h-5.600z" fill="none" stroke="#d6d6d6" stroke-width="1.200"/><path d="M151.700 6.500v5M153 6.500v5M154.300 6.500v5" stroke="#d6d6d6" stroke-width=".8"/>
</svg>
<svg style="left:1528px;top:779px" width="9" height="9" viewBox="0 0 9 9"><path d="M8.500 1L1 8.500M8.500 4L4 8.500M8.500 7L7 8.500" stroke="#6c6c6c" stroke-width="1" stroke-dasharray="1 1"/></svg>
<div class="abs" style="left:1238px;top:790px;width:300px;height:7px;background:#4e4e4e;border-top:1px solid #424242"></div>
<div class="abs" style="left:1379px;top:792px;width:16px;height:3px;background:repeating-linear-gradient(90deg,#3a3a3a 0 1px,transparent 1px 2px)"></div>
<!-- right dock -->
<div class="abs" style="left:1540px;top:60px;width:3px;height:885px;background:linear-gradient(90deg,#323232,#2a2a2a)"></div>
<div class="abs" style="left:1543px;top:60px;width:35px;height:10px;background:#3a3a3a"></div>
<div class="abs" style="left:1543px;top:70px;width:35px;height:875px;background:#575757;border-left:2px solid #5e5e5e"></div>
<svg style="left:1566px;top:62px" width="8" height="6" viewBox="0 0 8 6"><path d="M3.500 0L0 3L3.500 6ZM7.500 0L4 3L7.500 6Z" fill="#d0d0d0"/></svg>
<!-- group 1 -->
<div class="abs" style="left:1543px;top:70px;width:35px;height:1px;background:#626262"></div>
<div class="abs" style="left:1552px;top:73px;width:18px;height:3px;background:repeating-linear-gradient(90deg,#3e3e3e 0 1px,transparent 1px 2px)"></div>
<svg style="left:1553px;top:80px" width="18" height="20" viewBox="0 0 18 20"><g fill="#d6d6d6"><rect x="1.500" y="2" width="4.500" height="4" fill="none" stroke="#d6d6d6" stroke-width="1.100"/><rect x="1.500" y="7.500" width="4.500" height="4" fill="none" stroke="#d6d6d6" stroke-width="1.100"/><rect x="1" y="13" width="5.500" height="4.500"/><path d="M9 4.500c5-1.500 8 4 4 10.500" fill="none" stroke="#d6d6d6" stroke-width="1.700"/><path d="M7.500 5l4-3.500.5 5z"/></g></svg>
<div class="abs" style="left:1543px;top:105px;width:35px;height:1px;background:#454545"></div><div class="abs" style="left:1543px;top:106px;width:35px;height:1px;background:#626262"></div>
<!-- group 2 -->
<div class="abs" style="left:1552px;top:110px;width:18px;height:3px;background:repeating-linear-gradient(90deg,#3e3e3e 0 1px,transparent 1px 2px)"></div>
<svg style="left:1553px;top:119px" width="17" height="17" viewBox="0 0 17 17"><path d="M1 1.500H6L7.500 3.500H16V15.500H1Z" fill="none" stroke="#cfcfcf" stroke-width="1.300"/><path d="M3.500 13.500V9h2V7.500h2.500V9h1.500V7.500h2.500V9h1.500v4.500z" fill="#bdbdbd"/></svg>
<svg style="left:1554px;top:146px" width="15" height="14" viewBox="0 0 15 14"><path d="M.5 .5L14 7L.5 13.500Z" fill="#d6d6d6"/></svg>
<!-- dock continues under floating panels -->
<svg style="left:1552px;top:220px" width="18" height="18" viewBox="0 0 18 18"><circle cx="9" cy="9" r="7.500" fill="#dcdcdc"/><circle cx="9" cy="5" r="1.500" fill="#444"/><path d="M7 7.500h3.300v5.500h1.200v1.200H6.800v-1.200H8V8.700H7z" fill="#444"/></svg>
<div class="abs" style="left:1543px;top:243px;width:35px;height:1px;background:#454545"></div><div class="abs" style="left:1543px;top:244px;width:35px;height:1px;background:#626262"></div>
<div class="abs" style="left:1552px;top:248px;width:18px;height:3px;background:repeating-linear-gradient(90deg,#3e3e3e 0 1px,transparent 1px 2px)"></div>
<svg style="left:1551px;top:257px" width="20" height="19" viewBox="0 0 20 19"><circle cx="6.500" cy="12" r="4.800" fill="#5a5a5a" stroke="#3c3c3c" stroke-width="1"/><circle cx="13.500" cy="12" r="4.800" fill="#1e1e1e"/><circle cx="10" cy="6.500" r="4.800" fill="#9c9c9c" stroke="#666" stroke-width=".6"/></svg>
<svg style="left:1553px;top:282px" width="18" height="18" viewBox="0 0 18 18"><g fill="#d6d6d6"><path d="M1 2h2M4 2h3M1 5h2M4 5h3M1 8h2M4 8h3" stroke="#d6d6d6" stroke-width="1.400"/><path d="M10.500 1.500h3.500c1 0 1.200.8.800 1.700l-.8 2.800v2h3.500v3h-10.500v-3h3.500v-2l-.8-2.800c-.4-.9-.2-1.700.8-1.700z"/><rect x="6.500" y="12.500" width="11" height="2"/></g></svg>
<div class="abs" style="left:1558px;top:303px;width:6px;height:2px;background:#bbb;border-radius:1px"></div>
<!-- floating icon panel 1 (Color) -->
<div class="abs" style="left:1538px;top:173px;width:34px;height:47px;background:#545454;border-radius:3px 3px 0 0;box-shadow:0 0 0 1px #3c3c3c"></div>
<div class="abs" style="left:1538px;top:173px;width:34px;height:11px;background:#383838;border-radius:3px 3px 0 0"></div>
<svg style="left:1546px;top:175.500px" width="8" height="6" viewBox="0 0 8 6"><path d="M0 0L3.500 3L0 6ZM4 0L7.500 3L4 6Z" fill="#d0d0d0"/></svg>
<svg style="left:1561px;top:175.500px" width="7" height="6" viewBox="0 0 7 6"><path d="M.5 0L6.500 6M6.500 0L.5 6" stroke="#d4d4d4" stroke-width="1.500"/></svg>
<div class="abs" style="left:1546px;top:187px;width:18px;height:3px;background:repeating-linear-gradient(90deg,#3e3e3e 0 1px,transparent 1px 2px)"></div>
<div class="abs" style="left:1542px;top:193px;width:27px;height:22px;background:#3e3e3e;border-radius:3px;border:1px solid #363636"></div>
<svg style="left:1546px;top:196px" width="19" height="16" viewBox="0 0 19 16"><path d="M9.500 1C15 1 18.500 4 18 8c-.3 2.500-2.500 3-4 2.300-1.500-.7-2.800.3-2 1.700.8 1.500-.5 3-3 3C4 15 .5 12 .5 8S4 1 9.500 1z" fill="#e0e0e0"/><g fill="#3e3e3e"><circle cx="5" cy="6" r="1.400"/><circle cx="9" cy="4" r="1.400"/><circle cx="13.500" cy="5" r="1.400"/><circle cx="4.500" cy="10" r="1.400"/><circle cx="8" cy="12.300" r="1.300"/></g></svg>
<!-- floating icon panel 2 (tools/layers) -->
<div class="abs" style="left:1540px;top:310px;width:34px;height:90px;background:#545454;border-radius:3px 3px 0 0;box-shadow:0 0 0 1px #3c3c3c"></div>
<div class="abs" style="left:1540px;top:310px;width:34px;height:11px;background:#383838;border-radius:3px 3px 0 0"></div>
<svg style="left:1547px;top:312.500px" width="8" height="6" viewBox="0 0 8 6"><path d="M0 0L3.500 3L0 6ZM4 0L7.500 3L4 6Z" fill="#d0d0d0"/></svg>
<svg style="left:1563px;top:312.500px" width="7" height="6" viewBox="0 0 7 6"><path d="M.5 0L6.500 6M6.500 0L.5 6" stroke="#d4d4d4" stroke-width="1.500"/></svg>
<div class="abs" style="left:1548px;top:324px;width:18px;height:3px;background:repeating-linear-gradient(90deg,#3e3e3e 0 1px,transparent 1px 2px)"></div>
<svg style="left:1548px;top:333px" width="18" height="18" viewBox="0 0 18 18"><g stroke="#dcdcdc" fill="none" stroke-linecap="round"><path d="M3 15L12.500 5.500" stroke-width="2.200"/><path d="M15 15L6 6" stroke-width="2"/></g><path d="M2 3.500a3.300 3.300 0 0 1 4.500-1.800L4.500 3.800l1.300 1.300 2-2A3.300 3.300 0 0 1 3.500 7 3.300 3.300 0 0 1 2 3.500z" fill="#dcdcdc"/><path d="M11.500 4l2-2.500 3 3-2.500 2z" fill="#dcdcdc"/><path d="M1.500 16.500l1.500-3.500 2 2z" fill="#dcdcdc"/></svg>
<div class="abs" style="left:1540px;top:357px;width:34px;height:1px;background:#3c3c3c"></div>
<div class="abs" style="left:1540px;top:358px;width:34px;height:4px;background:#484848"></div>
<div class="abs" style="left:1540px;top:362px;width:34px;height:1px;background:#626262"></div>
<div class="abs" style="left:1548px;top:365px;width:18px;height:3px;background:repeating-linear-gradient(90deg,#3e3e3e 0 1px,transparent 1px 2px)"></div>
<div class="abs" style="left:1543px;top:373px;width:28px;height:21px;background:#3e3e3e;border-radius:3px;border:1px solid #363636"></div>
<svg style="left:1549px;top:375px" width="17" height="17" viewBox="0 0 17 17"><path d="M8.500 1.500L15.500 6L8.500 10.500L1.500 6Z" fill="#e4e4e4"/><path d="M3.200 8.800L1.500 10L8.500 14.500L15.500 10L13.800 8.800L8.500 12.200Z" fill="#e4e4e4"/></svg>
</div>
</body>
</html>
